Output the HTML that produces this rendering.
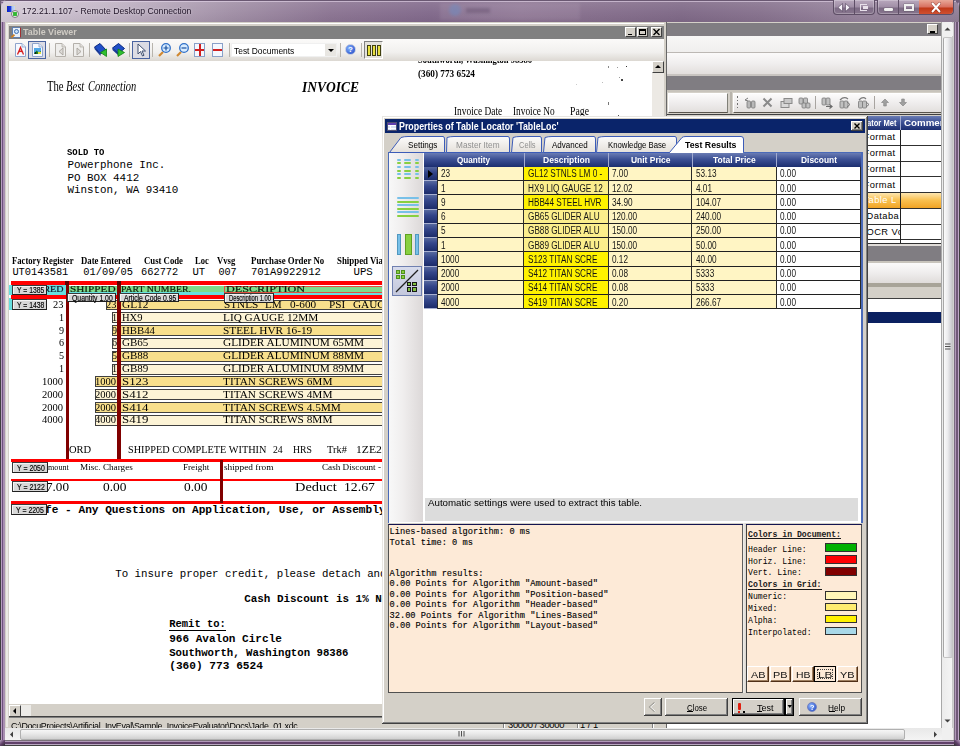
<!DOCTYPE html>
<html><head><meta charset="utf-8">
<style>
*{margin:0;padding:0;box-sizing:border-box}
html,body{width:960px;height:746px;overflow:hidden;background:#6f5f78;font-family:"Liberation Sans",sans-serif}
.a{position:absolute}
.t{position:absolute;white-space:pre;line-height:1}
.ser{font-family:"Liberation Serif",serif}
.mono{font-family:"Liberation Mono",monospace}
</style></head><body>

<!-- RDP frame -->
<div class="a" style="left:0;top:0;width:960px;height:746px;background:linear-gradient(90deg,#404040 0,#404040 1px,#b8a0c0 1px,#b8a0c0 2px,#705080 2px,#705080 3.5px,#a890b0 3.5px,#a890b0 5px,#787078 5px,#787078 6px,#6a5872 6px,#6a5872 953px,#d0d0d0 953px,#d0d0d0 954px,#7a6a80 954px,#7a6a80 955px,#b098b8 955px,#b098b8 956.5px,#705878 956.5px,#705878 958px,#c0a8c8 958px,#c0a8c8 959px,#404040 959px);border-radius:7px 7px 0 0"></div>
<div class="a" style="left:5px;top:740px;width:949px;height:6px;background:linear-gradient(180deg,#787078 0,#787078 1px,#b098b8 1px,#b098b8 2px,#60406a 2px,#60406a 4px,#b8a8c0 4px,#b8a8c0 5px,#404040 5px)"></div>
<div class="a" style="left:0;top:740px;width:5px;height:6px;background:linear-gradient(135deg,#b8a0c0,#60406a 50%,#303030)"></div>
<div class="a" style="left:954px;top:740px;width:6px;height:6px;background:linear-gradient(225deg,#c0a8c8,#60406a 50%,#303030)"></div>
<div class="a" style="left:1px;top:1px;width:958px;height:21px;border-radius:6px 6px 0 0;background:linear-gradient(90deg,#d4cad6 0,#c2b5c6 100px,#a08ea5 230px,#8a7391 330px,#80688a 430px,#8a7290 520px,#7e6886 680px,#85708c 760px,#95829b 860px,#8f7d95 960px)"></div>
<div class="a" style="left:1px;top:1px;width:958px;height:21px;border-radius:6px 6px 0 0;background:linear-gradient(180deg,rgba(255,255,255,.12) 0,rgba(255,255,255,.03) 12px,rgba(0,0,0,.03) 21px)"></div>
<div class="a" style="left:440px;top:3px;width:140px;height:17px;background:rgba(255,240,255,.08);filter:blur(1.5px)"></div>
<div class="a" style="left:449px;top:4px;width:12px;height:12px;border-radius:50%;background:#6a8ec8;filter:blur(1.8px);opacity:.45"></div>
<div class="a" style="left:466px;top:8px;width:24px;height:5px;background:rgba(60,40,70,.25);filter:blur(1.5px)"></div>
<div class="a" style="left:1px;top:1px;width:955px;height:1px;background:rgba(230,215,235,.6);border-radius:6px 6px 0 0"></div>
<!-- rdp icon -->
<div class="a" style="left:6px;top:5px;width:10px;height:8px;background:linear-gradient(90deg,#0a20c8 0,#2040e0 50%,#a8c0f0 60%,#c8d8f8 100%);border:1px solid #d8d0c0"></div>
<div class="a" style="left:10.5px;top:10px;width:8px;height:8px;border-radius:50%;background:radial-gradient(circle,#30b030 0,#40c040 55%,#f0f0f0 60%,#d0d0d0 100%);border:0.5px solid #808080"></div>
<div class="t" style="left:22px;top:6px;font-size:9.6px;color:#201428;transform:scaleX(0.905);transform-origin:0 0;text-shadow:0 0 3px rgba(255,255,255,.6)">172.21.1.107 - Remote Desktop Connection</div>
<!-- caption buttons -->
<div class="a" style="left:833px;top:0;width:42px;height:15px;border:1px solid #5e4e66;border-top:none;border-radius:0 0 4px 4px;background:linear-gradient(180deg,#b8a8bd 0,#a08ea6 7px,#7c6a84 8px,#8a7890 15px);box-shadow:inset 0 0 0 1px rgba(255,255,255,.25)"></div>
<div class="a" style="left:854px;top:0;width:1px;height:14px;background:#5e4e66"></div>
<svg class="a" style="left:836px;top:2px" width="16" height="11"><path d="M6.5 1.5 L2 5.5 L6.5 9.5 Z M9.5 1.5 L14 5.5 L9.5 9.5 Z" fill="#f4f0f6" stroke="#50405a" stroke-width="0.6"/></svg>
<div class="a" style="left:860px;top:4px;width:7px;height:7px;border:1.5px solid #e8e0ea;border-right:none"></div>
<div class="a" style="left:863px;top:6px;width:5px;height:3px;background:#e8e0ea"></div>
<div class="a" style="left:877px;top:0;width:77px;height:15px;border:1px solid #5e4e66;border-top:none;border-radius:0 0 4px 4px;background:linear-gradient(180deg,#b8a8bd 0,#a08ea6 7px,#7c6a84 8px,#8a7890 15px);overflow:hidden;box-shadow:inset 0 0 0 1px rgba(255,255,255,.25)"></div>
<div class="a" style="left:898px;top:0;width:1px;height:14px;background:#5e4e66"></div>
<div class="a" style="left:919px;top:0;width:34px;height:14px;border-radius:0 0 4px 0;background:linear-gradient(180deg,#e8a898 0,#d87060 7px,#c03818 8px,#d05030 14px)"></div>
<div class="a" style="left:884px;top:8px;width:9px;height:3px;background:#f0f0f0;border-radius:1px;box-shadow:0 0 1px #333"></div>
<div class="a" style="left:904px;top:4px;width:10px;height:7px;border:2px solid #f0f0f0;box-shadow:0 0 1px #333"></div>
<svg class="a" style="left:930px;top:2px" width="12" height="11"><path d="M2.5 1.5 L9.5 9.5 M9.5 1.5 L2.5 9.5" stroke="#5a1008" stroke-width="3" stroke-linecap="round" opacity=".5"/><path d="M2.5 1.5 L9.5 9.5 M9.5 1.5 L2.5 9.5" stroke="#fff" stroke-width="2" stroke-linecap="round"/></svg>
<!-- content bg -->
<div class="a" style="left:5px;top:22px;width:948px;height:718px;background:#4a3a50"></div>

<div class="a" style="left:5px;top:22px;width:662px;height:706px;background:#d4d0c8"></div>
<div class="a" style="left:6px;top:23px;width:659px;height:1px;background:#fff"></div>
<div class="a" style="left:6px;top:23px;width:2px;height:704px;background:#eceae6"></div>
<div class="a" style="left:664px;top:23px;width:2px;height:704px;background:#d4d0c8"></div>
<div class="a" style="left:666px;top:22px;width:1.2px;height:706px;background:#686868"></div>
<div class="a" style="left:9px;top:26px;width:655px;height:13px;background:#808080"></div>
<div class="a" style="left:12px;top:27px;width:9px;height:11px;background:#e8f0f8;border:1px solid #6080b0;border-right-color:#a03030"></div>
<div class="a" style="left:14px;top:29px;width:5px;height:5px;border-radius:50%;border:1px solid #4070b0;background:#c8e0f8"></div>
<div class="a" style="left:11px;top:35px;width:4px;height:2px;background:#d08020;transform:rotate(-45deg)"></div>
<div class="t" style="left:23px;top:27.4px;font-size:9.6px;font-weight:bold;color:#cfcbc4;transform:scaleX(0.93);transform-origin:0 0">Table Viewer</div>
<div class="a" style="left:625px;top:27px;width:11px;height:10px;background:#d4d0c8;border:1px solid;border-color:#fff #404040 #404040 #fff"></div>
<div class="a" style="left:637px;top:27px;width:11px;height:10px;background:#d4d0c8;border:1px solid;border-color:#fff #404040 #404040 #fff"></div>
<div class="a" style="left:651px;top:27px;width:11px;height:10px;background:#d4d0c8;border:1px solid;border-color:#fff #404040 #404040 #fff"></div>
<div class="a" style="left:628px;top:34px;width:4px;height:1px;background:#000"></div>
<div class="a" style="left:639px;top:29px;width:7px;height:6px;border:1px solid #000;border-top-width:2px"></div>
<svg class="a" style="left:652px;top:28px" width="9" height="8"><path d="M1.5 1 L7.5 7 M7.5 1 L1.5 7" stroke="#000" stroke-width="1.4"/></svg>
<div class="a" style="left:9px;top:39px;width:655px;height:22px;background:linear-gradient(180deg,#fbfaf9 0,#f1f0ee 60%,#dcd8d2 100%)"></div>
<div class="a" style="left:28px;top:41px;width:18px;height:18px;background:#dcdce4;border:1px solid #4a64a0"></div>
<div class="a" style="left:132px;top:41px;width:18px;height:18px;background:#dcdce4;border:1px solid #4a64a0"></div>
<div class="a" style="left:364px;top:41px;width:19px;height:18px;background:#e4e2dc;border:1px solid;border-color:#808080 #fff #fff #808080"></div>
<div class="a" style="left:48.5px;top:43px;width:1px;height:14px;background:#b8b4ac"></div>
<div class="a" style="left:88.5px;top:43px;width:1px;height:14px;background:#b8b4ac"></div>
<div class="a" style="left:129px;top:43px;width:1px;height:14px;background:#b8b4ac"></div>
<div class="a" style="left:152px;top:43px;width:1px;height:14px;background:#b8b4ac"></div>
<div class="a" style="left:228.5px;top:43px;width:1px;height:14px;background:#b8b4ac"></div>
<div class="a" style="left:339.5px;top:43px;width:1px;height:14px;background:#b8b4ac"></div>
<div class="a" style="left:361px;top:43px;width:1px;height:14px;background:#b8b4ac"></div>
<svg class="a" style="left:14px;top:42px" width="13" height="16"><path d="M1.5 1.5 H8 L11.5 5 V14.5 H1.5 Z" fill="#f6f9ff" stroke="#8ea4cc" stroke-width="1"/><path d="M8 1.5 V5 H11.5" fill="#dfe8f8" stroke="#8ea4cc" stroke-width="0.8"/><path d="M3.5 12.5 L6.5 5.5 L9.5 12.5 M4.5 10 Q6.5 8.5 9 10" fill="none" stroke="#d82020" stroke-width="1.3"/></svg>
<svg class="a" style="left:31px;top:42px" width="13" height="16"><path d="M1.5 1.5 H8 L11.5 5 V14.5 H1.5 Z" fill="#f6f9ff" stroke="#8ea4cc" stroke-width="1"/><path d="M8 1.5 V5 H11.5" fill="#dfe8f8" stroke="#8ea4cc" stroke-width="0.8"/><rect x="3" y="6" width="7" height="6" fill="#50a8e8"/><path d="M3 12 L5.5 8.5 L8 10.5 L10 9 V12 Z" fill="#208020"/><circle cx="4.5" cy="11" r="1" fill="#102010"/><rect x="7" y="10" width="3" height="2" fill="#e0e040"/></svg>
<svg class="a" style="left:54px;top:42px" width="14" height="16"><path d="M1.5 1.5 H8 L11.5 5 V14.5 H1.5 Z" fill="#efeeec" stroke="#b4b0aa" stroke-width="1"/><path d="M8 1.5 V5 H11.5" fill="#e0deda" stroke="#b4b0aa" stroke-width="0.8"/><path d="M9 6 L5 9.5 L9 13 Z" fill="#dcdad6" stroke="#a8a49e" stroke-width="0.9"/></svg>
<svg class="a" style="left:72px;top:42px" width="14" height="16"><path d="M1.5 1.5 H8 L11.5 5 V14.5 H1.5 Z" fill="#efeeec" stroke="#b4b0aa" stroke-width="1"/><path d="M8 1.5 V5 H11.5" fill="#e0deda" stroke="#b4b0aa" stroke-width="0.8"/><path d="M5 6 L9 9.5 L5 13 Z" fill="#dcdad6" stroke="#a8a49e" stroke-width="0.9"/></svg>
<svg class="a" style="left:93px;top:42px" width="15" height="16"><path d="M1.5 5 L7 1.5 L13 8 L7.5 12 Z" fill="#2050c8" stroke="#0c2a80" stroke-width="1"/><path d="M1.5 5 L1.5 7 L7.5 14 L7.5 12 Z" fill="#1a3a98"/><path d="M7.5 10.5 L13.5 7 V14.5 Z" fill="#30c030" stroke="#108010" stroke-width="0.8"/></svg>
<svg class="a" style="left:111px;top:42px" width="15" height="16"><path d="M1.5 6 L7.5 1.5 L13.5 6.5 L7.5 11.5 Z" fill="#2050c8" stroke="#0c2a80" stroke-width="1"/><path d="M1.5 6 L1.5 8 L7.5 13.5 L7.5 11.5 Z" fill="#1a3a98"/><path d="M7 7 L13.5 10.5 L7 14.5 Z" fill="#30c030" stroke="#108010" stroke-width="0.8"/></svg>
<svg class="a" style="left:136px;top:43px" width="12" height="14"><path d="M2 1 L2 11 L4.5 8.5 L6.5 13 L8 12.3 L6 8 L9.5 8 Z" fill="#fff" stroke="#405070" stroke-width="1"/></svg>
<svg class="a" style="left:157px;top:42px" width="15" height="16"><line x1="2" y1="14" x2="6" y2="10" stroke="#d08830" stroke-width="2.2"/><circle cx="9" cy="6" r="4.3" fill="#d8ecff" stroke="#3070c8" stroke-width="1.3"/><path d="M6.5 6 H11.5 M9 3.5 V8.5" stroke="#1850a0" stroke-width="1.2"/></svg>
<svg class="a" style="left:175px;top:42px" width="15" height="16"><line x1="2" y1="14" x2="6" y2="10" stroke="#d08830" stroke-width="2.2"/><circle cx="9" cy="6" r="4.3" fill="#d8ecff" stroke="#3070c8" stroke-width="1.3"/><path d="M6.5 6 H11.5" stroke="#1850a0" stroke-width="1.2"/></svg>
<div class="a" style="left:194px;top:43px;width:11px;height:14px;background:#f4f8ff;border:1px solid #8aa0c8"></div>
<div class="a" style="left:199px;top:44px;width:1.5px;height:12px;background:#d02020"></div>
<div class="a" style="left:195px;top:49px;width:9px;height:1.5px;background:#d02020"></div>
<div class="a" style="left:212px;top:43px;width:11px;height:14px;background:#f4f8ff;border:1px solid #8aa0c8"></div>
<div class="a" style="left:213px;top:49px;width:9px;height:1.5px;background:#d02020"></div>
<div class="a" style="left:231px;top:43px;width:106px;height:14px;background:#fff;border:1px solid #f0f0f0"></div>
<div class="t" style="left:234px;top:45.5px;font-size:9.5px;color:#000;transform:scaleX(0.885);transform-origin:0 0">Test Documents</div>
<div class="a" style="left:325px;top:44px;width:11px;height:12px;background:#e8e6e2"></div>
<div class="a" style="left:328px;top:49px;width:0;height:0;border-left:3px solid transparent;border-right:3px solid transparent;border-top:3px solid #000"></div>
<div class="a" style="left:345px;top:44px;width:11px;height:11px;border-radius:50%;background:radial-gradient(circle at 35% 35%,#80b0ff,#1840c0);border:1px solid #c0c8e0"></div>
<div class="t" style="left:348px;top:45.5px;font-size:8px;font-weight:bold;color:#fff">?</div>
<div class="a" style="left:367px;top:45px;width:4px;height:11px;background:#e8e040;border:1px solid #404010"></div>
<div class="a" style="left:372px;top:45px;width:4px;height:11px;background:#e8e040;border:1px solid #404010"></div>
<div class="a" style="left:377px;top:45px;width:4px;height:11px;background:#e8e040;border:1px solid #404010"></div>
<div class="a" style="left:652px;top:61px;width:12px;height:643px;background:#ece9e4"></div>
<div class="a" style="left:652px;top:61px;width:12px;height:12px;background:#d4d0c8;border:1px solid;border-color:#fff #404040 #404040 #fff"></div>
<div class="a" style="left:655px;top:65px;width:0;height:0;border-left:3px solid transparent;border-right:3px solid transparent;border-bottom:3px solid #000"></div>
<div class="a" style="left:9px;top:704px;width:655px;height:13px;background:#d4d0c8"></div>
<div class="a" style="left:9px;top:705px;width:12px;height:12px;background:#d4d0c8;border:1px solid;border-color:#fff #404040 #404040 #fff"></div>
<div class="a" style="left:13px;top:708px;width:0;height:0;border-top:3px solid transparent;border-bottom:3px solid transparent;border-right:3px solid #000"></div>
<div class="a" style="left:21px;top:705px;width:10px;height:11px;background:#ecebe8"></div>
<div class="a" style="left:9px;top:716px;width:655px;height:1px;background:#404040"></div>
<div class="a" style="left:9px;top:717px;width:655px;height:11px;background:#d4d0c8;border-top:1px solid #808080"></div>
<div class="a" style="left:9px;top:718px;width:655px;height:10px;overflow:hidden"><div class="t" style="left:2px;top:2.8px;font-size:9.4px;color:#000;letter-spacing:-0.35px;transform:scaleX(0.95);transform-origin:0 0">C:\DocuProjects\Artificial_InvEval\Sample_InvoiceEvaluator\Docs\Jade_01.xdc</div></div>
<div class="a" style="left:503.4px;top:718px;width:1px;height:10px;background:#808080;box-shadow:1px 0 0 #fff"></div>
<div class="a" style="left:577px;top:718px;width:1px;height:10px;background:#808080;box-shadow:1px 0 0 #fff"></div>
<div class="a" style="left:652px;top:718px;width:1px;height:10px;background:#808080;box-shadow:1px 0 0 #fff"></div>
<div class="t" style="left:508px;top:719.5px;font-size:9.4px;color:#000;letter-spacing:-0.3px">30000 / 30000</div>
<div class="t" style="left:580px;top:719.5px;font-size:9.4px;color:#000">1 / 1</div>
<div class="a" style="left:9px;top:61px;width:643px;height:643px;background:#fff"></div>
<div class="a" style="left:9px;top:61px;width:643px;height:643px;overflow:hidden;background:#fff"><div class="a" style="left:-9px;top:-61px;width:960px;height:746px">
<div class="t" style="left:418.3px;top:54.00px;font-family:'Liberation Serif';font-size:10.77px;font-weight:bold;font-style:normal;color:#000;transform:scaleX(0.7901);transform-origin:0 0;">Southworth, Washington 98386</div>
<div class="t" style="left:418.3px;top:67.70px;font-family:'Liberation Serif';font-size:10.77px;font-weight:bold;font-style:normal;color:#000;transform:scaleX(0.8586);transform-origin:0 0;">(360) 773 6524</div>
<div class="t" style="left:46.8px;top:78.70px;font-family:'Liberation Serif';font-size:14.46px;font-weight:normal;font-style:normal;color:#000;transform:scaleX(0.7383);transform-origin:0 0;">The</div>
<div class="t" style="left:66px;top:78.70px;font-family:'Liberation Serif';font-size:14.46px;font-weight:normal;font-style:italic;color:#000;transform:scaleX(0.7352);transform-origin:0 0;">Best</div>
<div class="t" style="left:88.1px;top:78.70px;font-family:'Liberation Serif';font-size:14.46px;font-weight:normal;font-style:italic;color:#000;transform:scaleX(0.7248);transform-origin:0 0;">Connection</div>
<div class="t" style="left:302px;top:80.30px;font-family:'Liberation Serif';font-size:14.31px;font-weight:bold;font-style:italic;color:#000;transform:scaleX(0.9439);transform-origin:0 0;">INVOICE</div>
<div class="t" style="left:454.2px;top:105.80px;font-family:'Liberation Serif';font-size:11.54px;font-weight:normal;font-style:normal;color:#000;transform:scaleX(0.8137);transform-origin:0 0;">Invoice Date</div>
<div class="t" style="left:513.3px;top:105.80px;font-family:'Liberation Serif';font-size:11.54px;font-weight:normal;font-style:normal;color:#000;transform:scaleX(0.8087);transform-origin:0 0;">Invoice No</div>
<div class="t" style="left:570px;top:105.80px;font-family:'Liberation Serif';font-size:11.54px;font-weight:normal;font-style:normal;color:#000;transform:scaleX(0.8474);transform-origin:0 0;">Page</div>
<div class="a" style="left:608px;top:66px;width:1.2px;height:1.5px;background:#888;"></div>
<div class="a" style="left:617px;top:66.5px;width:1px;height:1.2px;background:#999;"></div>
<div class="a" style="left:625.5px;top:65.5px;width:1.5px;height:1.5px;background:#333;"></div>
<div class="a" style="left:619px;top:77px;width:1.2px;height:1.2px;background:#999;"></div>
<div class="a" style="left:621px;top:79px;width:1.5px;height:1.8px;background:#444;"></div>
<div class="a" style="left:602px;top:82px;width:1px;height:1px;background:#bbb;"></div>
<div class="a" style="left:607.5px;top:102px;width:1px;height:2.5px;background:#777;"></div>
<div class="a" style="left:618px;top:114.5px;width:1px;height:1px;background:#555;"></div>
<div class="a" style="left:576px;top:84px;width:1px;height:1px;background:#ccc;"></div>
<div class="t" style="left:67.4px;top:148.90px;font-family:'Liberation Mono';font-size:8.64px;font-weight:bold;font-style:normal;color:#000;transform:scaleX(1.0294);transform-origin:0 0;">SOLD TO</div>
<div class="t" style="left:67.4px;top:160.00px;font-family:'Liberation Mono';font-size:10.88px;font-weight:normal;color:#000">Powerphone Inc.</div>
<div class="t" style="left:67.4px;top:172.60px;font-family:'Liberation Mono';font-size:10.88px;font-weight:normal;color:#000">PO BOX 4412</div>
<div class="t" style="left:67.4px;top:185.10px;font-family:'Liberation Mono';font-size:10.88px;font-weight:normal;color:#000">Winston, WA 93410</div>
<div class="t" style="left:12.4px;top:255.90px;font-family:'Liberation Serif';font-size:10.15px;font-weight:bold;font-style:normal;color:#000;transform:scaleX(0.8512);transform-origin:0 0;">Factory Register</div>
<div class="t" style="left:81.3px;top:255.90px;font-family:'Liberation Serif';font-size:10.15px;font-weight:bold;font-style:normal;color:#000;transform:scaleX(0.8613);transform-origin:0 0;">Date Entered</div>
<div class="t" style="left:144.2px;top:255.90px;font-family:'Liberation Serif';font-size:10.15px;font-weight:bold;font-style:normal;color:#000;transform:scaleX(0.8610);transform-origin:0 0;">Cust Code</div>
<div class="t" style="left:194.5px;top:255.90px;font-family:'Liberation Serif';font-size:10.15px;font-weight:bold;font-style:normal;color:#000;transform:scaleX(0.8460);transform-origin:0 0;">Loc</div>
<div class="t" style="left:217.4px;top:255.90px;font-family:'Liberation Serif';font-size:10.15px;font-weight:bold;font-style:normal;color:#000;transform:scaleX(0.8555);transform-origin:0 0;">Vvsg</div>
<div class="t" style="left:250.9px;top:255.90px;font-family:'Liberation Serif';font-size:10.15px;font-weight:bold;font-style:normal;color:#000;transform:scaleX(0.8714);transform-origin:0 0;">Purchase Order No</div>
<div class="t" style="left:337.3px;top:255.90px;font-family:'Liberation Serif';font-size:10.15px;font-weight:bold;font-style:normal;color:#000;transform:scaleX(0.8741);transform-origin:0 0;">Shipped Via</div>
<div class="t" style="left:12.4px;top:267.10px;font-family:'Liberation Mono';font-size:10.37px;font-weight:normal;color:#000">UT0143581</div>
<div class="t" style="left:83.2px;top:267.10px;font-family:'Liberation Mono';font-size:10.40px;font-weight:normal;color:#000">01/09/05</div>
<div class="t" style="left:141px;top:267.10px;font-family:'Liberation Mono';font-size:10.37px;font-weight:normal;color:#000">662772</div>
<div class="t" style="left:192.4px;top:267.10px;font-family:'Liberation Mono';font-size:10.67px;font-weight:normal;color:#000">UT</div>
<div class="t" style="left:218.4px;top:268.10px;font-family:'Liberation Mono';font-size:10.17px;font-weight:normal;color:#000">007</div>
<div class="t" style="left:250.9px;top:267.10px;font-family:'Liberation Mono';font-size:10.62px;font-weight:normal;color:#000">701A9922912</div>
<div class="t" style="left:353.5px;top:267.10px;font-family:'Liberation Mono';font-size:10.72px;font-weight:normal;color:#000">UPS</div>
<div class="a" style="left:11px;top:280.7px;width:372px;height:4.8px;background:#ff0000;"></div>
<div class="a" style="left:9px;top:285.2px;width:56.5px;height:9.8px;background:#66e0e0;"></div>
<div class="a" style="left:68.6px;top:285.5px;width:314px;height:7px;background:#7fdc8a;"></div>
<div class="a" style="left:68.6px;top:292.4px;width:314px;height:2.2px;background:#66e0e0;"></div>
<div class="a" style="left:224.4px;top:285.5px;width:160px;height:7.5px;background:transparent;border:1px solid #e05040;border-right:none"></div>
<div class="t" style="left:15.5px;top:284.80px;font-family:'Liberation Serif';font-size:8.62px;font-weight:normal;font-style:normal;color:#101828;transform:scaleX(1.1683);transform-origin:0 0;-webkit-text-stroke:0.2px #101828">ORDERED</div>
<div class="t" style="left:69.9px;top:284.80px;font-family:'Liberation Serif';font-size:8.62px;font-weight:normal;font-style:normal;color:#0c1c0c;transform:scaleX(1.3052);transform-origin:0 0;-webkit-text-stroke:0.2px #0c1c0c">SHIPPED</div>
<div class="t" style="left:121px;top:284.80px;font-family:'Liberation Serif';font-size:8.62px;font-weight:normal;font-style:normal;color:#0c1c0c;transform:scaleX(1.1348);transform-origin:0 0;-webkit-text-stroke:0.2px #0c1c0c">PART NUMBER.</div>
<div class="t" style="left:225.5px;top:284.80px;font-family:'Liberation Serif';font-size:8.62px;font-weight:normal;font-style:normal;color:#0c1c0c;transform:scaleX(1.4115);transform-origin:0 0;-webkit-text-stroke:0.2px #0c1c0c">DESCRIPTION</div>
<div class="a" style="left:9px;top:298.3px;width:3px;height:12px;background:#66e0e0;"></div>
<div class="a" style="left:106px;top:299.5px;width:277px;height:10.9px;background:#f8df8c;border:1px solid #404040;border-right:none"></div>
<div class="t" style="left:53.2px;top:298.97px;font-family:'Liberation Serif';font-size:10.92px;font-weight:normal;font-style:normal;color:#000;transform:scaleX(0.9536);transform-origin:0 0;">23</div>
<div class="a" style="left:107px;top:300.50px;width:10px;height:9px;overflow:hidden"><div class="a" style="left:-107px;top:-300.50px;width:400px;height:500px"><div class="t" style="left:106.2px;top:298.97px;font-family:'Liberation Serif';font-size:10.92px;font-weight:normal;font-style:normal;color:#000;transform:scaleX(0.9536);transform-origin:0 0;">23</div></div></div>
<div class="t" style="left:122px;top:299.97px;font-family:'Liberation Serif';font-size:10.15px;font-weight:normal;font-style:normal;color:#000;transform:scaleX(1.1175);transform-origin:0 0;">GL12</div>
<div class="t" style="left:223.8px;top:299.97px;font-family:'Liberation Serif';font-size:10.60px;font-weight:normal;font-style:normal;color:#000;transform:scaleX(1.06);transform-origin:0 0">STNLS</div>
<div class="t" style="left:265.3px;top:299.97px;font-family:'Liberation Serif';font-size:10.60px;font-weight:normal;font-style:normal;color:#000;transform:scaleX(1.06);transform-origin:0 0">LM</div>
<div class="t" style="left:290px;top:299.97px;font-family:'Liberation Serif';font-size:10.60px;font-weight:normal;font-style:normal;color:#000;transform:scaleX(1.06);transform-origin:0 0">0-600</div>
<div class="t" style="left:328.7px;top:299.97px;font-family:'Liberation Serif';font-size:10.60px;font-weight:normal;font-style:normal;color:#000;transform:scaleX(1.06);transform-origin:0 0">PSI</div>
<div class="t" style="left:352.5px;top:299.97px;font-family:'Liberation Serif';font-size:10.60px;font-weight:normal;font-style:normal;color:#000;transform:scaleX(1.06);transform-origin:0 0">GAUGE</div>
<div class="a" style="left:112.2px;top:312.33px;width:270.8px;height:10.9px;background:#fdf4d6;border:1px solid #404040;border-right:none"></div>
<div class="t" style="left:58.6px;top:311.80px;font-family:'Liberation Serif';font-size:10.92px;font-weight:normal;font-style:normal;color:#000;transform:scaleX(0.9261);transform-origin:0 0;">1</div>
<div class="a" style="left:113.2px;top:313.33px;width:3.799999999999997px;height:9px;overflow:hidden"><div class="a" style="left:-113.2px;top:-313.33px;width:400px;height:500px"><div class="t" style="left:111.6px;top:311.80px;font-family:'Liberation Serif';font-size:10.92px;font-weight:normal;font-style:normal;color:#000;transform:scaleX(0.9261);transform-origin:0 0;">1</div></div></div>
<div class="t" style="left:122px;top:312.80px;font-family:'Liberation Serif';font-size:10.15px;font-weight:normal;font-style:normal;color:#000;transform:scaleX(1.0413);transform-origin:0 0;">HX9</div>
<div class="t" style="left:223.4px;top:312.80px;font-family:'Liberation Serif';font-size:10.60px;font-weight:normal;font-style:normal;color:#000;transform:scaleX(1.065);transform-origin:0 0">LIQ GAUGE 12MM</div>
<div class="a" style="left:112.2px;top:325.16px;width:270.8px;height:10.9px;background:#f8df8c;border:1px solid #404040;border-right:none"></div>
<div class="t" style="left:58.6px;top:324.63px;font-family:'Liberation Serif';font-size:10.92px;font-weight:normal;font-style:normal;color:#000;transform:scaleX(0.9261);transform-origin:0 0;">9</div>
<div class="a" style="left:113.2px;top:326.16px;width:3.799999999999997px;height:9px;overflow:hidden"><div class="a" style="left:-113.2px;top:-326.16px;width:400px;height:500px"><div class="t" style="left:111.6px;top:324.63px;font-family:'Liberation Serif';font-size:10.92px;font-weight:normal;font-style:normal;color:#000;transform:scaleX(0.9261);transform-origin:0 0;">9</div></div></div>
<div class="t" style="left:122px;top:325.63px;font-family:'Liberation Serif';font-size:10.15px;font-weight:normal;font-style:normal;color:#000;transform:scaleX(1.0661);transform-origin:0 0;">HBB44</div>
<div class="t" style="left:223.4px;top:325.63px;font-family:'Liberation Serif';font-size:10.60px;font-weight:normal;font-style:normal;color:#000;transform:scaleX(1.065);transform-origin:0 0">STEEL HVR 16-19</div>
<div class="a" style="left:112.2px;top:337.99px;width:270.8px;height:10.9px;background:#fdf4d6;border:1px solid #404040;border-right:none"></div>
<div class="t" style="left:58.6px;top:337.46px;font-family:'Liberation Serif';font-size:10.92px;font-weight:normal;font-style:normal;color:#000;transform:scaleX(0.9261);transform-origin:0 0;">6</div>
<div class="a" style="left:113.2px;top:338.99px;width:3.799999999999997px;height:9px;overflow:hidden"><div class="a" style="left:-113.2px;top:-338.99px;width:400px;height:500px"><div class="t" style="left:111.6px;top:337.46px;font-family:'Liberation Serif';font-size:10.92px;font-weight:normal;font-style:normal;color:#000;transform:scaleX(0.9261);transform-origin:0 0;">6</div></div></div>
<div class="t" style="left:122px;top:338.46px;font-family:'Liberation Serif';font-size:10.15px;font-weight:normal;font-style:normal;color:#000;transform:scaleX(1.0908);transform-origin:0 0;">GB65</div>
<div class="t" style="left:223.4px;top:338.46px;font-family:'Liberation Serif';font-size:10.60px;font-weight:normal;font-style:normal;color:#000;transform:scaleX(1.065);transform-origin:0 0">GLIDER ALUMINUM 65MM</div>
<div class="a" style="left:112.2px;top:350.82px;width:270.8px;height:10.9px;background:#f8df8c;border:1px solid #404040;border-right:none"></div>
<div class="t" style="left:58.6px;top:350.29px;font-family:'Liberation Serif';font-size:10.92px;font-weight:normal;font-style:normal;color:#000;transform:scaleX(0.9261);transform-origin:0 0;">5</div>
<div class="a" style="left:113.2px;top:351.82px;width:3.799999999999997px;height:9px;overflow:hidden"><div class="a" style="left:-113.2px;top:-351.82px;width:400px;height:500px"><div class="t" style="left:111.6px;top:350.29px;font-family:'Liberation Serif';font-size:10.92px;font-weight:normal;font-style:normal;color:#000;transform:scaleX(0.9261);transform-origin:0 0;">5</div></div></div>
<div class="t" style="left:122px;top:351.29px;font-family:'Liberation Serif';font-size:10.15px;font-weight:normal;font-style:normal;color:#000;transform:scaleX(1.0908);transform-origin:0 0;">GB88</div>
<div class="t" style="left:223.4px;top:351.29px;font-family:'Liberation Serif';font-size:10.60px;font-weight:normal;font-style:normal;color:#000;transform:scaleX(1.065);transform-origin:0 0">GLIDER ALUMINUM 88MM</div>
<div class="a" style="left:112.2px;top:363.65px;width:270.8px;height:10.9px;background:#fdf4d6;border:1px solid #404040;border-right:none"></div>
<div class="t" style="left:58.6px;top:363.12px;font-family:'Liberation Serif';font-size:10.92px;font-weight:normal;font-style:normal;color:#000;transform:scaleX(0.9261);transform-origin:0 0;">1</div>
<div class="a" style="left:113.2px;top:364.65px;width:3.799999999999997px;height:9px;overflow:hidden"><div class="a" style="left:-113.2px;top:-364.65px;width:400px;height:500px"><div class="t" style="left:111.6px;top:363.12px;font-family:'Liberation Serif';font-size:10.92px;font-weight:normal;font-style:normal;color:#000;transform:scaleX(0.9261);transform-origin:0 0;">1</div></div></div>
<div class="t" style="left:122px;top:364.12px;font-family:'Liberation Serif';font-size:10.15px;font-weight:normal;font-style:normal;color:#000;transform:scaleX(1.0908);transform-origin:0 0;">GB89</div>
<div class="t" style="left:223.4px;top:364.12px;font-family:'Liberation Serif';font-size:10.60px;font-weight:normal;font-style:normal;color:#000;transform:scaleX(1.065);transform-origin:0 0">GLIDER ALUMINUM 89MM</div>
<div class="a" style="left:94.6px;top:376.48px;width:288.4px;height:10.9px;background:#f8df8c;border:1px solid #404040;border-right:none"></div>
<div class="t" style="left:42.4px;top:375.95px;font-family:'Liberation Serif';font-size:10.92px;font-weight:normal;font-style:normal;color:#000;transform:scaleX(0.9673);transform-origin:0 0;">1000</div>
<div class="a" style="left:95.6px;top:377.48px;width:21.400000000000006px;height:9px;overflow:hidden"><div class="a" style="left:-95.6px;top:-377.48px;width:400px;height:500px"><div class="t" style="left:95.4px;top:375.95px;font-family:'Liberation Serif';font-size:10.92px;font-weight:normal;font-style:normal;color:#000;transform:scaleX(0.9673);transform-origin:0 0;">1000</div></div></div>
<div class="t" style="left:122px;top:376.95px;font-family:'Liberation Serif';font-size:10.15px;font-weight:normal;font-style:normal;color:#000;transform:scaleX(1.2675);transform-origin:0 0;">S123</div>
<div class="t" style="left:223.4px;top:376.95px;font-family:'Liberation Serif';font-size:10.60px;font-weight:normal;font-style:normal;color:#000;transform:scaleX(1.065);transform-origin:0 0">TITAN SCREWS 6MM</div>
<div class="a" style="left:94.6px;top:389.31px;width:288.4px;height:10.9px;background:#fdf4d6;border:1px solid #404040;border-right:none"></div>
<div class="t" style="left:42.4px;top:388.78px;font-family:'Liberation Serif';font-size:10.92px;font-weight:normal;font-style:normal;color:#000;transform:scaleX(0.9673);transform-origin:0 0;">2000</div>
<div class="a" style="left:95.6px;top:390.31px;width:21.400000000000006px;height:9px;overflow:hidden"><div class="a" style="left:-95.6px;top:-390.31px;width:400px;height:500px"><div class="t" style="left:95.4px;top:388.78px;font-family:'Liberation Serif';font-size:10.92px;font-weight:normal;font-style:normal;color:#000;transform:scaleX(0.9673);transform-origin:0 0;">2000</div></div></div>
<div class="t" style="left:122px;top:389.78px;font-family:'Liberation Serif';font-size:10.15px;font-weight:normal;font-style:normal;color:#000;transform:scaleX(1.2675);transform-origin:0 0;">S412</div>
<div class="t" style="left:223.4px;top:389.78px;font-family:'Liberation Serif';font-size:10.60px;font-weight:normal;font-style:normal;color:#000;transform:scaleX(1.065);transform-origin:0 0">TITAN SCREWS 4MM</div>
<div class="a" style="left:94.6px;top:402.14px;width:288.4px;height:10.9px;background:#f8df8c;border:1px solid #404040;border-right:none"></div>
<div class="t" style="left:42.4px;top:401.61px;font-family:'Liberation Serif';font-size:10.92px;font-weight:normal;font-style:normal;color:#000;transform:scaleX(0.9673);transform-origin:0 0;">2000</div>
<div class="a" style="left:95.6px;top:403.14px;width:21.400000000000006px;height:9px;overflow:hidden"><div class="a" style="left:-95.6px;top:-403.14px;width:400px;height:500px"><div class="t" style="left:95.4px;top:401.61px;font-family:'Liberation Serif';font-size:10.92px;font-weight:normal;font-style:normal;color:#000;transform:scaleX(0.9673);transform-origin:0 0;">2000</div></div></div>
<div class="t" style="left:122px;top:402.61px;font-family:'Liberation Serif';font-size:10.15px;font-weight:normal;font-style:normal;color:#000;transform:scaleX(1.2675);transform-origin:0 0;">S414</div>
<div class="t" style="left:223.4px;top:402.61px;font-family:'Liberation Serif';font-size:10.60px;font-weight:normal;font-style:normal;color:#000;transform:scaleX(1.065);transform-origin:0 0">TITAN SCREWS 4.5MM</div>
<div class="a" style="left:94.6px;top:414.97px;width:288.4px;height:10.9px;background:#fdf4d6;border:1px solid #404040;border-right:none"></div>
<div class="t" style="left:42.4px;top:414.44px;font-family:'Liberation Serif';font-size:10.92px;font-weight:normal;font-style:normal;color:#000;transform:scaleX(0.9673);transform-origin:0 0;">4000</div>
<div class="a" style="left:95.6px;top:415.97px;width:21.400000000000006px;height:9px;overflow:hidden"><div class="a" style="left:-95.6px;top:-415.97px;width:400px;height:500px"><div class="t" style="left:95.4px;top:414.44px;font-family:'Liberation Serif';font-size:10.92px;font-weight:normal;font-style:normal;color:#000;transform:scaleX(0.9673);transform-origin:0 0;">4000</div></div></div>
<div class="t" style="left:122px;top:415.44px;font-family:'Liberation Serif';font-size:10.15px;font-weight:normal;font-style:normal;color:#000;transform:scaleX(1.2675);transform-origin:0 0;">S419</div>
<div class="t" style="left:223.4px;top:415.44px;font-family:'Liberation Serif';font-size:10.60px;font-weight:normal;font-style:normal;color:#000;transform:scaleX(1.065);transform-origin:0 0">TITAN SCREWS 8MM</div>
<div class="a" style="left:11px;top:294.6px;width:372px;height:4.4px;background:#ff0000;"></div>
<div class="a" style="left:65.5px;top:280.7px;width:3.4px;height:181px;background:#800000;"></div>
<div class="a" style="left:117.2px;top:280.7px;width:3.4px;height:181px;background:#800000;"></div>
<div class="a" style="left:65px;top:280.7px;width:4.4px;height:4.8px;background:#600000;"></div>
<div class="a" style="left:116.7px;top:280.7px;width:4.4px;height:4.8px;background:#600000;"></div>
<div class="a" style="left:11.5px;top:284.8px;width:35.3px;height:10px;background:#d8d8d8;border:1px solid #3a3a3a;border-right-color:#202020;border-bottom:1.5px solid #202020;box-shadow:inset 1px 1px 0 #f4f4f4"></div><div class="t" style="left:16.5px;top:286.27px;font-family:'Liberation Sans';font-size:8.4px;color:#000;-webkit-text-stroke:0.15px #000;transform:scaleX(0.8119);transform-origin:0 0">Y = 1385</div>
<div class="a" style="left:11.5px;top:299px;width:35.3px;height:10.5px;background:#d8d8d8;border:1px solid #3a3a3a;border-right-color:#202020;border-bottom:1.5px solid #202020;box-shadow:inset 1px 1px 0 #f4f4f4"></div><div class="t" style="left:16.5px;top:300.72px;font-family:'Liberation Sans';font-size:8.4px;color:#000;-webkit-text-stroke:0.15px #000;transform:scaleX(0.8119);transform-origin:0 0">Y = 1438</div>
<div class="a" style="left:67.4px;top:292.9px;width:48.7px;height:9.6px;background:#d8d8d8;border:1px solid #3a3a3a;border-right-color:#202020;border-bottom:1.5px solid #202020;box-shadow:inset 1px 1px 0 #f4f4f4"></div><div class="t" style="left:72.4px;top:294.17px;font-family:'Liberation Sans';font-size:8.4px;color:#000;-webkit-text-stroke:0.15px #000;transform:scaleX(0.8168);transform-origin:0 0">Quantity 1.00</div>
<div class="a" style="left:119px;top:292.8px;width:60.2px;height:9.6px;background:#d8d8d8;border:1px solid #3a3a3a;border-right-color:#202020;border-bottom:1.5px solid #202020;box-shadow:inset 1px 1px 0 #f4f4f4"></div><div class="t" style="left:124px;top:294.07px;font-family:'Liberation Sans';font-size:8.4px;color:#000;-webkit-text-stroke:0.15px #000;transform:scaleX(0.8125);transform-origin:0 0">Article Code 0.95</div>
<div class="a" style="left:224.4px;top:293px;width:50px;height:9.8px;background:#d8d8d8;border:1px solid #3a3a3a;border-right-color:#202020;border-bottom:1.5px solid #202020;box-shadow:inset 1px 1px 0 #f4f4f4"></div><div class="t" style="left:229.4px;top:294.37px;font-family:'Liberation Sans';font-size:8.4px;color:#000;-webkit-text-stroke:0.15px #000;transform:scaleX(0.6939);transform-origin:0 0">Description 1.00</div>
<div class="t" style="left:69px;top:443.80px;font-family:'Liberation Serif';font-size:10.77px;font-weight:normal;font-style:normal;color:#000;transform:scaleX(0.9765);transform-origin:0 0;">ORD</div>
<div class="t" style="left:128.4px;top:443.80px;font-family:'Liberation Serif';font-size:10.77px;font-weight:normal;font-style:normal;color:#000;transform:scaleX(0.9536);transform-origin:0 0;">SHIPPED COMPLETE WITHIN</div>
<div class="t" style="left:273.3px;top:443.80px;font-family:'Liberation Serif';font-size:10.77px;font-weight:normal;font-style:normal;color:#000;transform:scaleX(0.9010);transform-origin:0 0;">24</div>
<div class="t" style="left:292.6px;top:443.80px;font-family:'Liberation Serif';font-size:10.77px;font-weight:normal;font-style:normal;color:#000;transform:scaleX(0.9020);transform-origin:0 0;">HRS</div>
<div class="t" style="left:326.5px;top:443.80px;font-family:'Liberation Serif';font-size:10.77px;font-weight:normal;font-style:normal;color:#000;transform:scaleX(0.9678);transform-origin:0 0;">Trk#</div>
<div class="t" style="left:355.5px;top:443.80px;font-family:'Liberation Serif';font-size:10.77px;font-weight:normal;font-style:normal;color:#000;transform:scaleX(1.0820);transform-origin:0 0;">1ZE2E</div>
<div class="a" style="left:11px;top:459.2px;width:372px;height:2.9px;background:#ff0000;"></div>
<div class="a" style="left:11px;top:479px;width:372px;height:2.4px;background:#ff0000;"></div>
<div class="a" style="left:11px;top:501px;width:372px;height:2.9px;background:#ff0000;"></div>
<div class="a" style="left:220.2px;top:460px;width:2.8px;height:43px;background:#800000;"></div>
<div class="t" style="left:47.6px;top:463.00px;font-family:'Liberation Serif';font-size:8.77px;font-weight:normal;font-style:normal;color:#000;transform:scaleX(0.9283);transform-origin:0 0;">mount</div>
<div class="t" style="left:80.3px;top:463.00px;font-family:'Liberation Serif';font-size:9.23px;font-weight:normal;font-style:normal;color:#000;transform:scaleX(0.9945);transform-origin:0 0;">Misc. Charges</div>
<div class="t" style="left:183px;top:463.00px;font-family:'Liberation Serif';font-size:9.23px;font-weight:normal;font-style:normal;color:#000;transform:scaleX(0.9872);transform-origin:0 0;">Freight</div>
<div class="t" style="left:223.5px;top:463.20px;font-family:'Liberation Serif';font-size:8.77px;font-weight:normal;font-style:normal;color:#000;transform:scaleX(1.0624);transform-origin:0 0;">shipped from</div>
<div class="t" style="left:322px;top:463.20px;font-family:'Liberation Serif';font-size:9.08px;font-weight:normal;font-style:normal;color:#000;transform:scaleX(1.0085);transform-origin:0 0;">Cash Discount -</div>
<div class="t" style="left:45.5px;top:482.40px;font-family:'Liberation Serif';font-size:11.54px;font-weight:normal;font-style:normal;color:#000;transform:scaleX(1.1393);transform-origin:0 0;">7.00</div>
<div class="t" style="left:103.4px;top:482.40px;font-family:'Liberation Serif';font-size:11.54px;font-weight:normal;font-style:normal;color:#000;transform:scaleX(1.1591);transform-origin:0 0;">0.00</div>
<div class="t" style="left:183.5px;top:482.40px;font-family:'Liberation Serif';font-size:11.54px;font-weight:normal;font-style:normal;color:#000;transform:scaleX(1.1591);transform-origin:0 0;">0.00</div>
<div class="t" style="left:294.6px;top:482.30px;font-family:'Liberation Serif';font-size:11.54px;font-weight:normal;font-style:normal;color:#000;transform:scaleX(1.2518);transform-origin:0 0;">Deduct</div>
<div class="t" style="left:344.4px;top:482.30px;font-family:'Liberation Serif';font-size:11.54px;font-weight:normal;font-style:normal;color:#000;transform:scaleX(1.1906);transform-origin:0 0;">12.67</div>
<div class="a" style="left:12px;top:462.4px;width:35.8px;height:10.9px;background:#d8d8d8;border:1px solid #3a3a3a;border-right-color:#202020;border-bottom:1.5px solid #202020;box-shadow:inset 1px 1px 0 #f4f4f4"></div><div class="t" style="left:17px;top:464.32px;font-family:'Liberation Sans';font-size:8.4px;color:#000;-webkit-text-stroke:0.15px #000;transform:scaleX(0.8268);transform-origin:0 0">Y = 2050</div>
<div class="a" style="left:12px;top:481.3px;width:35.8px;height:10.5px;background:#d8d8d8;border:1px solid #3a3a3a;border-right-color:#202020;border-bottom:1.5px solid #202020;box-shadow:inset 1px 1px 0 #f4f4f4"></div><div class="t" style="left:17px;top:483.02px;font-family:'Liberation Sans';font-size:8.4px;color:#000;-webkit-text-stroke:0.15px #000;transform:scaleX(0.8268);transform-origin:0 0">Y = 2122</div>
<div class="t" style="left:31.74px;top:505.20px;font-family:'Liberation Mono';font-size:11.13px;font-weight:bold;color:#000">Safe - Any Questions on Application, Use, or Assembly</div>
<div class="a" style="left:11.2px;top:504px;width:35.8px;height:10.7px;background:#d8d8d8;border:1px solid #3a3a3a;border-right-color:#202020;border-bottom:1.5px solid #202020;box-shadow:inset 1px 1px 0 #f4f4f4"></div><div class="t" style="left:16.2px;top:505.82px;font-family:'Liberation Sans';font-size:8.4px;color:#000;-webkit-text-stroke:0.15px #000;transform:scaleX(0.8268);transform-origin:0 0">Y = 2205</div>
<div class="t" style="left:115.2px;top:568.90px;font-family:'Liberation Mono';font-size:10.78px;font-weight:normal;color:#000">To insure proper credit, please detach and return</div>
<div class="t" style="left:244.2px;top:594.30px;font-family:'Liberation Mono';font-size:10.93px;font-weight:bold;color:#000">Cash Discount is 1% Net 10</div>
<div class="t" style="left:169.2px;top:619.00px;font-family:'Liberation Mono';font-size:10.50px;font-weight:bold;color:#000">Remit to:</div>
<div class="a" style="left:169.2px;top:629.6px;width:57px;height:1px;background:#000;"></div>
<div class="t" style="left:169.2px;top:634.20px;font-family:'Liberation Mono';font-size:11.05px;font-weight:bold;color:#000">966 Avalon Circle</div>
<div class="t" style="left:169.2px;top:648.20px;font-family:'Liberation Mono';font-size:10.68px;font-weight:bold;color:#000">Southworth, Washington 98386</div>
<div class="t" style="left:169.2px;top:660.50px;font-family:'Liberation Mono';font-size:11.17px;font-weight:bold;color:#000">(360) 773 6524</div>
</div></div>
<div class="a" style="left:667px;top:22px;width:274px;height:706px;overflow:hidden;background:#fff"><div class="a" style="left:-667px;top:-22px;width:960px;height:746px">
<div class="a" style="left:667px;top:22px;width:275px;height:1px;background:#d4d0c8;"></div>
<div class="a" style="left:667px;top:23px;width:275px;height:12.6px;background:#807d82;"></div>
<div class="a" style="left:927px;top:24px;width:11px;height:10px;background:#d4d0c8;border:1px solid;border-color:#fff #404040 #404040 #fff"></div>
<div class="a" style="left:930px;top:31px;width:5px;height:1.5px;background:#000;"></div>
<div class="a" style="left:667px;top:35.6px;width:275px;height:16px;background:linear-gradient(180deg,#f8f7f6,#f0efee);"></div>
<div class="a" style="left:667px;top:51.5px;width:275px;height:1.5px;background:#bcb8b4;"></div>
<div class="a" style="left:667px;top:53px;width:275px;height:21px;background:linear-gradient(180deg,#fbfafa 0,#f0eeee 50%,#e2dedc 100%);"></div>
<div class="a" style="left:667px;top:74px;width:275px;height:1.6px;background:#c8c4c0;"></div>
<div class="a" style="left:667px;top:75.6px;width:275px;height:14.7px;background:#807d82;"></div>
<div class="a" style="left:667px;top:90.3px;width:275px;height:2px;background:#c8c4bc;"></div>
<div class="a" style="left:667px;top:92px;width:275px;height:22.5px;background:#d4d0c8;"></div>
<div class="a" style="left:668px;top:93px;width:60px;height:20px;background:linear-gradient(180deg,#fcfbfb 0,#efeded 50%,#e2dfdd 100%);border:1px solid;border-color:#fff #808078 #58544c #fff"></div>
<div class="a" style="left:729.5px;top:92px;width:2.5px;height:22px;background:#b8b4ac;"></div>
<div class="a" style="left:733px;top:93px;width:209px;height:20px;background:linear-gradient(180deg,#fcfbfb 0,#efeded 50%,#e2dfdd 100%);border:1px solid;border-color:#fff #808078 #58544c #fff"></div>
<div class="a" style="left:736.5px;top:96.0px;width:1.2px;height:1.6px;background:#707070;"></div>
<div class="a" style="left:736.5px;top:99.6px;width:1.2px;height:1.6px;background:#707070;"></div>
<div class="a" style="left:736.5px;top:103.2px;width:1.2px;height:1.6px;background:#707070;"></div>
<div class="a" style="left:736.5px;top:106.8px;width:1.2px;height:1.6px;background:#707070;"></div>
<svg class="a" style="left:744px;top:97px" width="12" height="12"><path d="M1 3 L4 1 M1 3 L4 4" stroke="#7a7a7a" stroke-width="1"/><rect x="3" y="4" width="3.5" height="7" rx="1" fill="#b8b8b8" stroke="#7a7a7a" stroke-width="0.8"/><rect x="7.5" y="4" width="3.5" height="7" rx="1" fill="#b8b8b8" stroke="#7a7a7a" stroke-width="0.8"/></svg>
<svg class="a" style="left:762px;top:97px" width="11" height="11"><path d="M1.5 1.5 L9.5 9.5 M9.5 1.5 L1.5 9.5" stroke="#8a8a8a" stroke-width="2"/></svg>
<svg class="a" style="left:780px;top:97px" width="13" height="12"><rect x="1" y="4.5" width="8" height="6" fill="#d8d8d8" stroke="#8a8a8a" stroke-width="1"/><rect x="4" y="1.5" width="8" height="5" fill="#c8c8c8" stroke="#8a8a8a" stroke-width="1"/></svg>
<svg class="a" style="left:798px;top:96px" width="13" height="13"><rect x="1" y="2" width="4" height="6" rx="1" fill="#c0c0c0" stroke="#7a7a7a" stroke-width="0.8"/><rect x="5.5" y="2" width="4" height="6" rx="1" fill="#c0c0c0" stroke="#7a7a7a" stroke-width="0.8"/><rect x="4" y="7" width="4" height="5" rx="1" fill="#c0c0c0" stroke="#7a7a7a" stroke-width="0.8"/><rect x="8" y="7" width="4" height="5" rx="1" fill="#c0c0c0" stroke="#7a7a7a" stroke-width="0.8"/></svg>
<div class="a" style="left:815px;top:96px;width:1px;height:13px;background:#a8a4a0;"></div>
<svg class="a" style="left:821px;top:96px" width="13" height="14"><rect x="1" y="2" width="4" height="7" rx="1" fill="#c0c0c0" stroke="#7a7a7a" stroke-width="0.8"/><rect x="5" y="2" width="4" height="7" rx="1" fill="#c0c0c0" stroke="#7a7a7a" stroke-width="0.8"/><path d="M5 10.5 H10 M8.5 8.5 L11 10.5 L8.5 12.5" stroke="#6a6a6a" stroke-width="1.2" fill="none"/></svg>
<svg class="a" style="left:838px;top:96px" width="14" height="14"><path d="M2 4 Q6 0 10 3" stroke="#7a7a7a" stroke-width="1.2" fill="none"/><rect x="2" y="5" width="4" height="7" rx="1" fill="#c0c0c0" stroke="#7a7a7a" stroke-width="0.8"/><rect x="6" y="5" width="4" height="7" rx="1" fill="#c0c0c0" stroke="#7a7a7a" stroke-width="0.8"/><path d="M9 6 L12 8.5 L9 11" stroke="#7a7a7a" stroke-width="1" fill="none"/></svg>
<svg class="a" style="left:857px;top:96px" width="13" height="14"><path d="M2 4 Q6 0 9 3" stroke="#7a7a7a" stroke-width="1.2" fill="none"/><rect x="1.5" y="5" width="4" height="7" rx="1" fill="#c0c0c0" stroke="#7a7a7a" stroke-width="0.8"/><rect x="5.5" y="5" width="4" height="7" rx="1" fill="#c0c0c0" stroke="#7a7a7a" stroke-width="0.8"/><path d="M9 6 L12 8.5 L9 11" stroke="#7a7a7a" stroke-width="1" fill="none"/></svg>
<div class="a" style="left:874px;top:96px;width:1px;height:13px;background:#a8a4a0;"></div>
<svg class="a" style="left:881px;top:98px" width="8" height="9"><path d="M4 1 L7.5 4.5 L5.3 4.5 L5.3 8 L2.7 8 L2.7 4.5 L0.5 4.5 Z" fill="#a0a0a0" stroke="#808080" stroke-width="0.6"/></svg>
<svg class="a" style="left:899px;top:98px" width="8" height="9"><path d="M4 8 L7.5 4.5 L5.3 4.5 L5.3 1 L2.7 1 L2.7 4.5 L0.5 4.5 Z" fill="#a0a0a0" stroke="#808080" stroke-width="0.6"/></svg>
<div class="a" style="left:667px;top:113.5px;width:275px;height:1.5px;background:#404040;"></div>
<div class="a" style="left:667px;top:115px;width:275px;height:1px;background:#d4d0c8;"></div>
<div class="a" style="left:667px;top:116px;width:275px;height:14px;background:linear-gradient(180deg,#6a7cb4 0,#3c5094 45%,#1c2e70 100%);"></div>
<div class="a" style="left:900px;top:116px;width:1px;height:14px;background:#a0aad0;"></div>
<div class="t" style="left:866.50px;top:118.60px;font-family:'Liberation Sans';font-size:9.3px;font-weight:bold;color:#fff;transform:scaleX(0.8156);transform-origin:0 0;">ator Met</div>
<div class="t" style="left:904.00px;top:117.60px;font-family:'Liberation Sans';font-size:9.5px;font-weight:bold;color:#fff;transform:scaleX(1.0271);transform-origin:0 0;">Comment</div>
<div class="a" style="left:667px;top:144.75px;width:275px;height:1px;background:#303030;"></div>
<div class="a" style="left:860px;top:130.00px;width:40px;height:15px;overflow:hidden"><div class="a" style="left:-860px;top:-130.00px;width:960px;height:200px"><div class="t" style="left:863.50px;top:133.30px;font-family:'Liberation Sans';font-size:9.3px;font-weight:normal;color:#000;letter-spacing:0.45px">Format</div></div></div>
<div class="a" style="left:667px;top:160.5px;width:275px;height:1px;background:#303030;"></div>
<div class="a" style="left:860px;top:145.75px;width:40px;height:15px;overflow:hidden"><div class="a" style="left:-860px;top:-145.75px;width:960px;height:200px"><div class="t" style="left:863.50px;top:149.05px;font-family:'Liberation Sans';font-size:9.3px;font-weight:normal;color:#000;letter-spacing:0.45px">Format</div></div></div>
<div class="a" style="left:667px;top:176.25px;width:275px;height:1px;background:#303030;"></div>
<div class="a" style="left:860px;top:161.50px;width:40px;height:15px;overflow:hidden"><div class="a" style="left:-860px;top:-161.50px;width:960px;height:200px"><div class="t" style="left:863.50px;top:164.80px;font-family:'Liberation Sans';font-size:9.3px;font-weight:normal;color:#000;letter-spacing:0.45px">Format</div></div></div>
<div class="a" style="left:667px;top:192.0px;width:275px;height:1px;background:#303030;"></div>
<div class="a" style="left:860px;top:177.25px;width:40px;height:15px;overflow:hidden"><div class="a" style="left:-860px;top:-177.25px;width:960px;height:200px"><div class="t" style="left:863.50px;top:180.55px;font-family:'Liberation Sans';font-size:9.3px;font-weight:normal;color:#000;letter-spacing:0.45px">Format</div></div></div>
<div class="a" style="left:667px;top:193.0px;width:275px;height:15.75px;background:linear-gradient(180deg,#fde6b0 0,#f9c050 45%,#f0a020 100%);"></div>
<div class="a" style="left:667px;top:207.75px;width:275px;height:1px;background:#303030;"></div>
<div class="a" style="left:860px;top:193.00px;width:40px;height:15px;overflow:hidden"><div class="a" style="left:-860px;top:-193.00px;width:960px;height:200px"><div class="t" style="left:863.50px;top:196.30px;font-family:'Liberation Sans';font-size:9.3px;font-weight:normal;color:#fff;letter-spacing:0.45px">Table L</div></div></div>
<div class="a" style="left:667px;top:223.5px;width:275px;height:1px;background:#303030;"></div>
<div class="a" style="left:860px;top:208.75px;width:40px;height:15px;overflow:hidden"><div class="a" style="left:-860px;top:-208.75px;width:960px;height:200px"><div class="t" style="left:866.50px;top:212.05px;font-family:'Liberation Sans';font-size:9.3px;font-weight:normal;color:#000;letter-spacing:0.45px">Databa</div></div></div>
<div class="a" style="left:667px;top:239.25px;width:275px;height:1px;background:#303030;"></div>
<div class="a" style="left:860px;top:224.50px;width:40px;height:15px;overflow:hidden"><div class="a" style="left:-860px;top:-224.50px;width:960px;height:200px"><div class="t" style="left:866.50px;top:227.80px;font-family:'Liberation Sans';font-size:9.3px;font-weight:normal;color:#000;letter-spacing:0.45px">OCR Vo</div></div></div>
<div class="a" style="left:900px;top:130px;width:1.2px;height:112.5px;background:#202020;"></div>
<div class="a" style="left:667px;top:243px;width:275px;height:1px;background:#303030;"></div>
<div class="a" style="left:667px;top:244px;width:275px;height:2px;background:#e0dcd8;"></div>
<div class="a" style="left:667px;top:246.2px;width:275px;height:15px;background:#807d82;"></div>
<div class="a" style="left:667px;top:261.2px;width:275px;height:2px;background:#c8c4bc;"></div>
<div class="a" style="left:667px;top:263px;width:275px;height:20px;background:linear-gradient(180deg,#fbfafa 0,#efeded 50%,#e0dcda 100%);"></div>
<div class="a" style="left:667px;top:283px;width:275px;height:3.5px;background:#a8a498;"></div>
<div class="a" style="left:667px;top:286.5px;width:275px;height:11.5px;background:#d4d0c8;"></div>
<div class="a" style="left:667px;top:298px;width:275px;height:1.2px;background:#404040;"></div>
<div class="a" style="left:667px;top:312px;width:275px;height:11px;background:#0a2060;"></div>
</div></div>
<div class="a" style="left:382px;top:116px;width:486px;height:608px;background:#404040;"></div>
<div class="a" style="left:382px;top:116px;width:485px;height:607px;background:#e8e6e2;"></div>
<div class="a" style="left:383px;top:117px;width:484px;height:606px;background:#808080;"></div>
<div class="a" style="left:383px;top:117px;width:483px;height:605px;background:#fff;"></div>
<div class="a" style="left:384px;top:118px;width:482px;height:604px;background:#d4d0c8;"></div>
<div class="a" style="left:385px;top:119px;width:480px;height:14px;background:#0a246a;"></div>
<div class="a" style="left:387px;top:122px;width:10px;height:9px;background:#d8e4f4;border:1px solid #505070"></div>
<div class="a" style="left:388px;top:123px;width:8px;height:1.6px;background:#6040b0;"></div>
<div class="a" style="left:388px;top:125.3px;width:8px;height:0.7px;background:#ffffff;"></div>
<div class="a" style="left:388px;top:127.5px;width:8px;height:0.7px;background:#ffffff;"></div>
<div class="a" style="left:390px;top:124.6px;width:0.7px;height:5.4px;background:#ffffff;"></div>
<div class="t" style="left:399.00px;top:121.60px;font-family:'Liberation Sans';font-size:10px;font-weight:bold;color:#fff;transform:scaleX(0.8862);transform-origin:0 0;">Properties of Table Locator &#x27;TableLoc&#x27;</div>
<div class="a" style="left:851px;top:121px;width:12px;height:10px;background:#404040;"></div><div class="a" style="left:851px;top:121px;width:11px;height:9px;background:#fff;"></div><div class="a" style="left:852px;top:122px;width:10px;height:8px;background:#808080;"></div><div class="a" style="left:852px;top:122px;width:9px;height:7px;background:#d4d0c8;"></div>
<svg class="a" style="left:853px;top:122px" width="8" height="8"><path d="M1.5 1.5 L6.5 6.5 M6.5 1.5 L1.5 6.5" stroke="#000" stroke-width="1.4"/></svg>
<div class="a" style="left:388px;top:152px;width:475px;height:371px;background:#fff;border-left:1px solid #4a6ab8;border-top:1px solid #4a6ab8;border-right:1px solid #4a6ab8"></div>
<svg class="a" style="left:389px;top:136px" width="57" height="17"><path d="M0.5 16.5 L12 1.5 Q15 0.5 19 0.5 L54 0.5 Q55.5 0.5 55.5 3 L55.5 16.5 Z" fill="url(#tg)" stroke="#3c5cb8" stroke-width="1"/><defs><linearGradient id="tg" x1="0" y1="0" x2="0" y2="1"><stop offset="0" stop-color="#fdfcfb"/><stop offset="1" stop-color="#e4e0da"/></linearGradient></defs></svg>
<svg class="a" style="left:446px;top:136px" width="65" height="17"><path d="M0.5 16.5 L1 1.5 Q4 0.5 8 0.5 L62 0.5 Q63.5 0.5 63.5 3 L63.5 16.5 Z" fill="url(#tg)" stroke="#3c5cb8" stroke-width="1"/><defs><linearGradient id="tg" x1="0" y1="0" x2="0" y2="1"><stop offset="0" stop-color="#fdfcfb"/><stop offset="1" stop-color="#e4e0da"/></linearGradient></defs></svg>
<svg class="a" style="left:511px;top:136px" width="32" height="17"><path d="M0.5 16.5 L2 1.5 Q5 0.5 9 0.5 L29 0.5 Q30.5 0.5 30.5 3 L30.5 16.5 Z" fill="url(#tg)" stroke="#3c5cb8" stroke-width="1"/><defs><linearGradient id="tg" x1="0" y1="0" x2="0" y2="1"><stop offset="0" stop-color="#fdfcfb"/><stop offset="1" stop-color="#e4e0da"/></linearGradient></defs></svg>
<svg class="a" style="left:543px;top:136px" width="54" height="17"><path d="M0.5 16.5 L2 1.5 Q5 0.5 9 0.5 L51 0.5 Q52.5 0.5 52.5 3 L52.5 16.5 Z" fill="url(#tg)" stroke="#3c5cb8" stroke-width="1"/><defs><linearGradient id="tg" x1="0" y1="0" x2="0" y2="1"><stop offset="0" stop-color="#fdfcfb"/><stop offset="1" stop-color="#e4e0da"/></linearGradient></defs></svg>
<svg class="a" style="left:596px;top:136px" width="82" height="17"><path d="M0.5 16.5 L2 1.5 Q5 0.5 9 0.5 L79 0.5 Q80.5 0.5 80.5 3 L80.5 16.5 Z" fill="url(#tg)" stroke="#3c5cb8" stroke-width="1"/><defs><linearGradient id="tg" x1="0" y1="0" x2="0" y2="1"><stop offset="0" stop-color="#fdfcfb"/><stop offset="1" stop-color="#e4e0da"/></linearGradient></defs></svg>
<svg class="a" style="left:669px;top:135px" width="76" height="19"><path d="M0.5 17.5 L13 2.5 Q14 1.5 17 1.5 L72 1.5 Q74.5 1.5 74.5 4 L74.5 17.5" fill="#fff" stroke="#3c5cb8" stroke-width="1"/><rect x="1" y="17" width="73" height="2" fill="#fff"/></svg>
<div class="t" style="left:407.85px;top:141.20px;font-family:'Liberation Sans';font-size:9px;font-weight:normal;color:#000;transform:scaleX(0.9007);transform-origin:0 0;">Settings</div>
<div class="t" style="left:456.20px;top:141.20px;font-family:'Liberation Sans';font-size:9px;font-weight:normal;color:#909090;transform:scaleX(0.9176);transform-origin:0 0;">Master Item</div>
<div class="t" style="left:518.70px;top:141.20px;font-family:'Liberation Sans';font-size:9px;font-weight:normal;color:#909090;transform:scaleX(0.8294);transform-origin:0 0;">Cells</div>
<div class="t" style="left:552.15px;top:141.20px;font-family:'Liberation Sans';font-size:9px;font-weight:normal;color:#000;transform:scaleX(0.8918);transform-origin:0 0;">Advanced</div>
<div class="t" style="left:607.90px;top:141.20px;font-family:'Liberation Sans';font-size:9px;font-weight:normal;color:#000;transform:scaleX(0.8614);transform-origin:0 0;">Knowledge Base</div>
<div class="t" style="left:684.75px;top:141.20px;font-family:'Liberation Sans';font-size:8.8px;font-weight:bold;color:#000;transform:scaleX(0.9970);transform-origin:0 0;">Test Results</div>
<div class="a" style="left:389px;top:153px;width:34px;height:369px;background:linear-gradient(90deg,#f8f8f8 0,#f0eeee 40%,#dcd8d8 100%);"></div>
<div class="a" style="left:397px;top:158.5px;width:3.5px;height:2.2px;background:#78c0e8;border-radius:1px"></div>
<div class="a" style="left:404px;top:158.5px;width:7px;height:2.2px;background:#78c0e8;border-radius:1px"></div>
<div class="a" style="left:414.5px;top:158.5px;width:4px;height:2.2px;background:#78c0e8;border-radius:1px"></div>
<div class="a" style="left:397px;top:162.2px;width:3.5px;height:2.2px;background:#88d040;border-radius:1px"></div>
<div class="a" style="left:404px;top:162.2px;width:7px;height:2.2px;background:#88d040;border-radius:1px"></div>
<div class="a" style="left:414.5px;top:162.2px;width:4px;height:2.2px;background:#88d040;border-radius:1px"></div>
<div class="a" style="left:397px;top:165.9px;width:3.5px;height:2.2px;background:#78c0e8;border-radius:1px"></div>
<div class="a" style="left:404px;top:165.9px;width:7px;height:2.2px;background:#78c0e8;border-radius:1px"></div>
<div class="a" style="left:414.5px;top:165.9px;width:4px;height:2.2px;background:#78c0e8;border-radius:1px"></div>
<div class="a" style="left:397px;top:169.6px;width:3.5px;height:2.2px;background:#88d040;border-radius:1px"></div>
<div class="a" style="left:404px;top:169.6px;width:7px;height:2.2px;background:#88d040;border-radius:1px"></div>
<div class="a" style="left:414.5px;top:169.6px;width:4px;height:2.2px;background:#88d040;border-radius:1px"></div>
<div class="a" style="left:397px;top:173.3px;width:3.5px;height:2.2px;background:#78c0e8;border-radius:1px"></div>
<div class="a" style="left:404px;top:173.3px;width:7px;height:2.2px;background:#78c0e8;border-radius:1px"></div>
<div class="a" style="left:414.5px;top:173.3px;width:4px;height:2.2px;background:#78c0e8;border-radius:1px"></div>
<div class="a" style="left:397px;top:177.0px;width:3.5px;height:2.2px;background:#88d040;border-radius:1px"></div>
<div class="a" style="left:404px;top:177.0px;width:7px;height:2.2px;background:#88d040;border-radius:1px"></div>
<div class="a" style="left:414.5px;top:177.0px;width:4px;height:2.2px;background:#88d040;border-radius:1px"></div>
<div class="a" style="left:397px;top:197.0px;width:21.5px;height:2.2px;background:#78c0e8;border-radius:1px"></div>
<div class="a" style="left:397px;top:200.55px;width:21.5px;height:2.2px;background:#88d040;border-radius:1px"></div>
<div class="a" style="left:397px;top:204.1px;width:21.5px;height:2.2px;background:#78c0e8;border-radius:1px"></div>
<div class="a" style="left:397px;top:207.65px;width:21.5px;height:2.2px;background:#88d040;border-radius:1px"></div>
<div class="a" style="left:397px;top:211.2px;width:21.5px;height:2.2px;background:#78c0e8;border-radius:1px"></div>
<div class="a" style="left:397px;top:214.75px;width:21.5px;height:2.2px;background:#88d040;border-radius:1px"></div>
<div class="a" style="left:397.3px;top:233.5px;width:4px;height:21px;background:#78c0e8;border:0.5px solid #5098c0"></div>
<div class="a" style="left:405px;top:233.5px;width:7px;height:21px;background:#88d040;border:0.5px solid #60a020"></div>
<div class="a" style="left:414.6px;top:233.5px;width:4px;height:21px;background:#78c0e8;border:0.5px solid #5098c0"></div>
<div class="a" style="left:392px;top:266.3px;width:30px;height:29.7px;background:linear-gradient(180deg,#d8dcec,#c4c8dc);border:1px solid #7080b0"></div>
<div class="a" style="left:396px;top:270px;width:3.5px;height:3.5px;background:#88d040;border:0.5px solid #509020"></div>
<div class="a" style="left:401px;top:270px;width:3.5px;height:3.5px;background:#88d040;border:0.5px solid #509020"></div>
<div class="a" style="left:396px;top:275px;width:3.5px;height:3.5px;background:#88d040;border:0.5px solid #509020"></div>
<div class="a" style="left:401px;top:275px;width:3.5px;height:3.5px;background:#88d040;border:0.5px solid #509020"></div>
<svg class="a" style="left:392px;top:266px" width="30" height="30"><line x1="4" y1="26" x2="26" y2="4" stroke="#202020" stroke-width="1.2"/></svg>
<div class="a" style="left:406.5px;top:281.5px;width:4.5px;height:4.5px;background:#80c040;border:1px solid #181818"></div>
<div class="a" style="left:412.0px;top:281.5px;width:4.5px;height:4.5px;background:#80c040;border:1px solid #181818"></div>
<div class="a" style="left:406.5px;top:287.0px;width:4.5px;height:4.5px;background:#80c040;border:1px solid #181818"></div>
<div class="a" style="left:412.0px;top:287.0px;width:4.5px;height:4.5px;background:#80c040;border:1px solid #181818"></div>
<div class="a" style="left:423.5px;top:152.5px;width:437px;height:14px;background:linear-gradient(180deg,#6a7cb4 0,#3c5094 45%,#1c2e70 100%);"></div>
<div class="a" style="left:523.5px;top:153px;width:1px;height:13.5px;background:#a0aad0;"></div>
<div class="a" style="left:608px;top:153px;width:1px;height:13.5px;background:#a0aad0;"></div>
<div class="a" style="left:691.5px;top:153px;width:1px;height:13.5px;background:#a0aad0;"></div>
<div class="a" style="left:776px;top:153px;width:1px;height:13.5px;background:#a0aad0;"></div>
<div class="t" style="left:457.00px;top:156.20px;font-family:'Liberation Sans';font-size:9px;font-weight:bold;color:#fff;transform:scaleX(0.9037);transform-origin:0 0;">Quantity</div>
<div class="t" style="left:542.75px;top:156.20px;font-family:'Liberation Sans';font-size:9px;font-weight:bold;color:#fff;transform:scaleX(0.9492);transform-origin:0 0;">Description</div>
<div class="t" style="left:630.55px;top:156.20px;font-family:'Liberation Sans';font-size:9px;font-weight:bold;color:#fff;transform:scaleX(0.9377);transform-origin:0 0;">Unit Price</div>
<div class="t" style="left:712.90px;top:156.20px;font-family:'Liberation Sans';font-size:9px;font-weight:bold;color:#fff;transform:scaleX(0.9414);transform-origin:0 0;">Total Price</div>
<div class="t" style="left:800.50px;top:156.20px;font-family:'Liberation Sans';font-size:9px;font-weight:bold;color:#fff;transform:scaleX(0.9347);transform-origin:0 0;">Discount</div>
<div class="a" style="left:423.5px;top:166.8px;width:13.5px;height:14.25px;background:linear-gradient(180deg,#56689e 0,#34468a 40%,#1c2c6a 100%);border-bottom:1px solid #a8b0d0"></div>
<div class="a" style="left:437px;top:166.8px;width:86.5px;height:14.25px;background:#fff5c4;"></div>
<div class="a" style="left:523.5px;top:166.8px;width:84.5px;height:14.25px;background:#fff200;"></div>
<div class="a" style="left:608px;top:166.8px;width:83.5px;height:14.25px;background:#fff5c4;"></div>
<div class="a" style="left:691.5px;top:166.8px;width:84.5px;height:14.25px;background:#fff5c4;"></div>
<div class="a" style="left:776px;top:166.8px;width:84px;height:14.25px;background:#fff;"></div>
<div class="a" style="left:437px;top:180px;width:423px;height:1px;background:#202020;"></div>
<div class="t" style="left:441.00px;top:169.40px;font-family:'Liberation Sans';font-size:10px;font-weight:normal;color:#151515;transform:scaleX(0.82);transform-origin:0 0">23</div>
<div class="t" style="left:528.30px;top:169.40px;font-family:'Liberation Sans';font-size:10px;font-weight:normal;color:#151515;transform:scaleX(0.82);transform-origin:0 0">GL12 STNLS LM 0 -</div>
<div class="t" style="left:611.80px;top:169.40px;font-family:'Liberation Sans';font-size:10px;font-weight:normal;color:#151515;transform:scaleX(0.82);transform-origin:0 0">7.00</div>
<div class="t" style="left:696.00px;top:169.40px;font-family:'Liberation Sans';font-size:10px;font-weight:normal;color:#151515;transform:scaleX(0.82);transform-origin:0 0">53.13</div>
<div class="t" style="left:780.00px;top:169.40px;font-family:'Liberation Sans';font-size:10px;font-weight:normal;color:#151515;transform:scaleX(0.82);transform-origin:0 0">0.00</div>
<div class="a" style="left:423.5px;top:181.05px;width:13.5px;height:14.25px;background:linear-gradient(180deg,#56689e 0,#34468a 40%,#1c2c6a 100%);border-bottom:1px solid #a8b0d0"></div>
<div class="a" style="left:437px;top:181.05px;width:86.5px;height:14.25px;background:#fff5c4;"></div>
<div class="a" style="left:523.5px;top:181.05px;width:84.5px;height:14.25px;background:#fbee8c;"></div>
<div class="a" style="left:608px;top:181.05px;width:83.5px;height:14.25px;background:#fff5c4;"></div>
<div class="a" style="left:691.5px;top:181.05px;width:84.5px;height:14.25px;background:#fff5c4;"></div>
<div class="a" style="left:776px;top:181.05px;width:84px;height:14.25px;background:#fff;"></div>
<div class="a" style="left:437px;top:194px;width:423px;height:1px;background:#202020;"></div>
<div class="t" style="left:441.00px;top:183.65px;font-family:'Liberation Sans';font-size:10px;font-weight:normal;color:#151515;transform:scaleX(0.82);transform-origin:0 0">1</div>
<div class="t" style="left:528.30px;top:183.65px;font-family:'Liberation Sans';font-size:10px;font-weight:normal;color:#151515;transform:scaleX(0.82);transform-origin:0 0">HX9 LIQ GAUGE 12</div>
<div class="t" style="left:611.80px;top:183.65px;font-family:'Liberation Sans';font-size:10px;font-weight:normal;color:#151515;transform:scaleX(0.82);transform-origin:0 0">12.02</div>
<div class="t" style="left:696.00px;top:183.65px;font-family:'Liberation Sans';font-size:10px;font-weight:normal;color:#151515;transform:scaleX(0.82);transform-origin:0 0">4.01</div>
<div class="t" style="left:780.00px;top:183.65px;font-family:'Liberation Sans';font-size:10px;font-weight:normal;color:#151515;transform:scaleX(0.82);transform-origin:0 0">0.00</div>
<div class="a" style="left:423.5px;top:195.3px;width:13.5px;height:14.25px;background:linear-gradient(180deg,#56689e 0,#34468a 40%,#1c2c6a 100%);border-bottom:1px solid #a8b0d0"></div>
<div class="a" style="left:437px;top:195.3px;width:86.5px;height:14.25px;background:#fff5c4;"></div>
<div class="a" style="left:523.5px;top:195.3px;width:84.5px;height:14.25px;background:#fff200;"></div>
<div class="a" style="left:608px;top:195.3px;width:83.5px;height:14.25px;background:#fff5c4;"></div>
<div class="a" style="left:691.5px;top:195.3px;width:84.5px;height:14.25px;background:#fff5c4;"></div>
<div class="a" style="left:776px;top:195.3px;width:84px;height:14.25px;background:#fff;"></div>
<div class="a" style="left:437px;top:209px;width:423px;height:1px;background:#202020;"></div>
<div class="t" style="left:441.00px;top:197.90px;font-family:'Liberation Sans';font-size:10px;font-weight:normal;color:#151515;transform:scaleX(0.82);transform-origin:0 0">9</div>
<div class="t" style="left:528.30px;top:197.90px;font-family:'Liberation Sans';font-size:10px;font-weight:normal;color:#151515;transform:scaleX(0.82);transform-origin:0 0">HBB44 STEEL HVR</div>
<div class="t" style="left:611.80px;top:197.90px;font-family:'Liberation Sans';font-size:10px;font-weight:normal;color:#151515;transform:scaleX(0.82);transform-origin:0 0">34.90</div>
<div class="t" style="left:696.00px;top:197.90px;font-family:'Liberation Sans';font-size:10px;font-weight:normal;color:#151515;transform:scaleX(0.82);transform-origin:0 0">104.07</div>
<div class="t" style="left:780.00px;top:197.90px;font-family:'Liberation Sans';font-size:10px;font-weight:normal;color:#151515;transform:scaleX(0.82);transform-origin:0 0">0.00</div>
<div class="a" style="left:423.5px;top:209.55px;width:13.5px;height:14.25px;background:linear-gradient(180deg,#56689e 0,#34468a 40%,#1c2c6a 100%);border-bottom:1px solid #a8b0d0"></div>
<div class="a" style="left:437px;top:209.55px;width:86.5px;height:14.25px;background:#fff5c4;"></div>
<div class="a" style="left:523.5px;top:209.55px;width:84.5px;height:14.25px;background:#fbee8c;"></div>
<div class="a" style="left:608px;top:209.55px;width:83.5px;height:14.25px;background:#fff5c4;"></div>
<div class="a" style="left:691.5px;top:209.55px;width:84.5px;height:14.25px;background:#fff5c4;"></div>
<div class="a" style="left:776px;top:209.55px;width:84px;height:14.25px;background:#fff;"></div>
<div class="a" style="left:437px;top:223px;width:423px;height:1px;background:#202020;"></div>
<div class="t" style="left:441.00px;top:212.15px;font-family:'Liberation Sans';font-size:10px;font-weight:normal;color:#151515;transform:scaleX(0.82);transform-origin:0 0">6</div>
<div class="t" style="left:528.30px;top:212.15px;font-family:'Liberation Sans';font-size:10px;font-weight:normal;color:#151515;transform:scaleX(0.82);transform-origin:0 0">GB65 GLIDER ALU</div>
<div class="t" style="left:611.80px;top:212.15px;font-family:'Liberation Sans';font-size:10px;font-weight:normal;color:#151515;transform:scaleX(0.82);transform-origin:0 0">120.00</div>
<div class="t" style="left:696.00px;top:212.15px;font-family:'Liberation Sans';font-size:10px;font-weight:normal;color:#151515;transform:scaleX(0.82);transform-origin:0 0">240.00</div>
<div class="t" style="left:780.00px;top:212.15px;font-family:'Liberation Sans';font-size:10px;font-weight:normal;color:#151515;transform:scaleX(0.82);transform-origin:0 0">0.00</div>
<div class="a" style="left:423.5px;top:223.8px;width:13.5px;height:14.25px;background:linear-gradient(180deg,#56689e 0,#34468a 40%,#1c2c6a 100%);border-bottom:1px solid #a8b0d0"></div>
<div class="a" style="left:437px;top:223.8px;width:86.5px;height:14.25px;background:#fff5c4;"></div>
<div class="a" style="left:523.5px;top:223.8px;width:84.5px;height:14.25px;background:#fbee8c;"></div>
<div class="a" style="left:608px;top:223.8px;width:83.5px;height:14.25px;background:#fff5c4;"></div>
<div class="a" style="left:691.5px;top:223.8px;width:84.5px;height:14.25px;background:#fff5c4;"></div>
<div class="a" style="left:776px;top:223.8px;width:84px;height:14.25px;background:#fff;"></div>
<div class="a" style="left:437px;top:237px;width:423px;height:1px;background:#202020;"></div>
<div class="t" style="left:441.00px;top:226.40px;font-family:'Liberation Sans';font-size:10px;font-weight:normal;color:#151515;transform:scaleX(0.82);transform-origin:0 0">5</div>
<div class="t" style="left:528.30px;top:226.40px;font-family:'Liberation Sans';font-size:10px;font-weight:normal;color:#151515;transform:scaleX(0.82);transform-origin:0 0">GB88 GLIDER ALU</div>
<div class="t" style="left:611.80px;top:226.40px;font-family:'Liberation Sans';font-size:10px;font-weight:normal;color:#151515;transform:scaleX(0.82);transform-origin:0 0">150.00</div>
<div class="t" style="left:696.00px;top:226.40px;font-family:'Liberation Sans';font-size:10px;font-weight:normal;color:#151515;transform:scaleX(0.82);transform-origin:0 0">250.00</div>
<div class="t" style="left:780.00px;top:226.40px;font-family:'Liberation Sans';font-size:10px;font-weight:normal;color:#151515;transform:scaleX(0.82);transform-origin:0 0">0.00</div>
<div class="a" style="left:423.5px;top:238.05px;width:13.5px;height:14.25px;background:linear-gradient(180deg,#56689e 0,#34468a 40%,#1c2c6a 100%);border-bottom:1px solid #a8b0d0"></div>
<div class="a" style="left:437px;top:238.05px;width:86.5px;height:14.25px;background:#fff5c4;"></div>
<div class="a" style="left:523.5px;top:238.05px;width:84.5px;height:14.25px;background:#fbee8c;"></div>
<div class="a" style="left:608px;top:238.05px;width:83.5px;height:14.25px;background:#fff5c4;"></div>
<div class="a" style="left:691.5px;top:238.05px;width:84.5px;height:14.25px;background:#fff5c4;"></div>
<div class="a" style="left:776px;top:238.05px;width:84px;height:14.25px;background:#fff;"></div>
<div class="a" style="left:437px;top:251px;width:423px;height:1px;background:#202020;"></div>
<div class="t" style="left:441.00px;top:240.65px;font-family:'Liberation Sans';font-size:10px;font-weight:normal;color:#151515;transform:scaleX(0.82);transform-origin:0 0">1</div>
<div class="t" style="left:528.30px;top:240.65px;font-family:'Liberation Sans';font-size:10px;font-weight:normal;color:#151515;transform:scaleX(0.82);transform-origin:0 0">GB89 GLIDER ALU</div>
<div class="t" style="left:611.80px;top:240.65px;font-family:'Liberation Sans';font-size:10px;font-weight:normal;color:#151515;transform:scaleX(0.82);transform-origin:0 0">150.00</div>
<div class="t" style="left:696.00px;top:240.65px;font-family:'Liberation Sans';font-size:10px;font-weight:normal;color:#151515;transform:scaleX(0.82);transform-origin:0 0">50.00</div>
<div class="t" style="left:780.00px;top:240.65px;font-family:'Liberation Sans';font-size:10px;font-weight:normal;color:#151515;transform:scaleX(0.82);transform-origin:0 0">0.00</div>
<div class="a" style="left:423.5px;top:252.3px;width:13.5px;height:14.25px;background:linear-gradient(180deg,#56689e 0,#34468a 40%,#1c2c6a 100%);border-bottom:1px solid #a8b0d0"></div>
<div class="a" style="left:437px;top:252.3px;width:86.5px;height:14.25px;background:#fff5c4;"></div>
<div class="a" style="left:523.5px;top:252.3px;width:84.5px;height:14.25px;background:#fff200;"></div>
<div class="a" style="left:608px;top:252.3px;width:83.5px;height:14.25px;background:#fff5c4;"></div>
<div class="a" style="left:691.5px;top:252.3px;width:84.5px;height:14.25px;background:#fff5c4;"></div>
<div class="a" style="left:776px;top:252.3px;width:84px;height:14.25px;background:#fff;"></div>
<div class="a" style="left:437px;top:266px;width:423px;height:1px;background:#202020;"></div>
<div class="t" style="left:441.00px;top:254.90px;font-family:'Liberation Sans';font-size:10px;font-weight:normal;color:#151515;transform:scaleX(0.82);transform-origin:0 0">1000</div>
<div class="t" style="left:528.30px;top:254.90px;font-family:'Liberation Sans';font-size:10px;font-weight:normal;color:#151515;transform:scaleX(0.82);transform-origin:0 0">S123 TITAN SCRE</div>
<div class="t" style="left:611.80px;top:254.90px;font-family:'Liberation Sans';font-size:10px;font-weight:normal;color:#151515;transform:scaleX(0.82);transform-origin:0 0">0.12</div>
<div class="t" style="left:696.00px;top:254.90px;font-family:'Liberation Sans';font-size:10px;font-weight:normal;color:#151515;transform:scaleX(0.82);transform-origin:0 0">40.00</div>
<div class="t" style="left:780.00px;top:254.90px;font-family:'Liberation Sans';font-size:10px;font-weight:normal;color:#151515;transform:scaleX(0.82);transform-origin:0 0">0.00</div>
<div class="a" style="left:423.5px;top:266.55px;width:13.5px;height:14.25px;background:linear-gradient(180deg,#56689e 0,#34468a 40%,#1c2c6a 100%);border-bottom:1px solid #a8b0d0"></div>
<div class="a" style="left:437px;top:266.55px;width:86.5px;height:14.25px;background:#fff5c4;"></div>
<div class="a" style="left:523.5px;top:266.55px;width:84.5px;height:14.25px;background:#fff200;"></div>
<div class="a" style="left:608px;top:266.55px;width:83.5px;height:14.25px;background:#fff5c4;"></div>
<div class="a" style="left:691.5px;top:266.55px;width:84.5px;height:14.25px;background:#fff5c4;"></div>
<div class="a" style="left:776px;top:266.55px;width:84px;height:14.25px;background:#fff;"></div>
<div class="a" style="left:437px;top:280px;width:423px;height:1px;background:#202020;"></div>
<div class="t" style="left:441.00px;top:269.15px;font-family:'Liberation Sans';font-size:10px;font-weight:normal;color:#151515;transform:scaleX(0.82);transform-origin:0 0">2000</div>
<div class="t" style="left:528.30px;top:269.15px;font-family:'Liberation Sans';font-size:10px;font-weight:normal;color:#151515;transform:scaleX(0.82);transform-origin:0 0">S412 TITAN SCRE</div>
<div class="t" style="left:611.80px;top:269.15px;font-family:'Liberation Sans';font-size:10px;font-weight:normal;color:#151515;transform:scaleX(0.82);transform-origin:0 0">0.08</div>
<div class="t" style="left:696.00px;top:269.15px;font-family:'Liberation Sans';font-size:10px;font-weight:normal;color:#151515;transform:scaleX(0.82);transform-origin:0 0">5333</div>
<div class="t" style="left:780.00px;top:269.15px;font-family:'Liberation Sans';font-size:10px;font-weight:normal;color:#151515;transform:scaleX(0.82);transform-origin:0 0">0.00</div>
<div class="a" style="left:423.5px;top:280.8px;width:13.5px;height:14.25px;background:linear-gradient(180deg,#56689e 0,#34468a 40%,#1c2c6a 100%);border-bottom:1px solid #a8b0d0"></div>
<div class="a" style="left:437px;top:280.8px;width:86.5px;height:14.25px;background:#fff5c4;"></div>
<div class="a" style="left:523.5px;top:280.8px;width:84.5px;height:14.25px;background:#fff200;"></div>
<div class="a" style="left:608px;top:280.8px;width:83.5px;height:14.25px;background:#fff5c4;"></div>
<div class="a" style="left:691.5px;top:280.8px;width:84.5px;height:14.25px;background:#fff5c4;"></div>
<div class="a" style="left:776px;top:280.8px;width:84px;height:14.25px;background:#fff;"></div>
<div class="a" style="left:437px;top:294px;width:423px;height:1px;background:#202020;"></div>
<div class="t" style="left:441.00px;top:283.40px;font-family:'Liberation Sans';font-size:10px;font-weight:normal;color:#151515;transform:scaleX(0.82);transform-origin:0 0">2000</div>
<div class="t" style="left:528.30px;top:283.40px;font-family:'Liberation Sans';font-size:10px;font-weight:normal;color:#151515;transform:scaleX(0.82);transform-origin:0 0">S414 TITAN SCRE</div>
<div class="t" style="left:611.80px;top:283.40px;font-family:'Liberation Sans';font-size:10px;font-weight:normal;color:#151515;transform:scaleX(0.82);transform-origin:0 0">0.08</div>
<div class="t" style="left:696.00px;top:283.40px;font-family:'Liberation Sans';font-size:10px;font-weight:normal;color:#151515;transform:scaleX(0.82);transform-origin:0 0">5333</div>
<div class="t" style="left:780.00px;top:283.40px;font-family:'Liberation Sans';font-size:10px;font-weight:normal;color:#151515;transform:scaleX(0.82);transform-origin:0 0">0.00</div>
<div class="a" style="left:423.5px;top:295.05px;width:13.5px;height:14.25px;background:linear-gradient(180deg,#56689e 0,#34468a 40%,#1c2c6a 100%);border-bottom:1px solid #a8b0d0"></div>
<div class="a" style="left:437px;top:295.05px;width:86.5px;height:14.25px;background:#fff5c4;"></div>
<div class="a" style="left:523.5px;top:295.05px;width:84.5px;height:14.25px;background:#fff200;"></div>
<div class="a" style="left:608px;top:295.05px;width:83.5px;height:14.25px;background:#fff5c4;"></div>
<div class="a" style="left:691.5px;top:295.05px;width:84.5px;height:14.25px;background:#fff5c4;"></div>
<div class="a" style="left:776px;top:295.05px;width:84px;height:14.25px;background:#fff;"></div>
<div class="a" style="left:437px;top:308px;width:423px;height:1px;background:#202020;"></div>
<div class="t" style="left:441.00px;top:297.65px;font-family:'Liberation Sans';font-size:10px;font-weight:normal;color:#151515;transform:scaleX(0.82);transform-origin:0 0">4000</div>
<div class="t" style="left:528.30px;top:297.65px;font-family:'Liberation Sans';font-size:10px;font-weight:normal;color:#151515;transform:scaleX(0.82);transform-origin:0 0">S419 TITAN SCRE</div>
<div class="t" style="left:611.80px;top:297.65px;font-family:'Liberation Sans';font-size:10px;font-weight:normal;color:#151515;transform:scaleX(0.82);transform-origin:0 0">0.20</div>
<div class="t" style="left:696.00px;top:297.65px;font-family:'Liberation Sans';font-size:10px;font-weight:normal;color:#151515;transform:scaleX(0.82);transform-origin:0 0">266.67</div>
<div class="t" style="left:780.00px;top:297.65px;font-family:'Liberation Sans';font-size:10px;font-weight:normal;color:#151515;transform:scaleX(0.82);transform-origin:0 0">0.00</div>
<div class="a" style="left:436.5px;top:166.8px;width:1.2px;height:142.5px;background:#2a2a2a;"></div>
<div class="a" style="left:523.0px;top:166.8px;width:1.2px;height:142.5px;background:#2a2a2a;"></div>
<div class="a" style="left:607.5px;top:166.8px;width:1.2px;height:142.5px;background:#2a2a2a;"></div>
<div class="a" style="left:691.0px;top:166.8px;width:1.2px;height:142.5px;background:#2a2a2a;"></div>
<div class="a" style="left:775.5px;top:166.8px;width:1.2px;height:142.5px;background:#2a2a2a;"></div>
<div class="a" style="left:859.5px;top:166.8px;width:1.2px;height:142.5px;background:#2a2a2a;"></div>
<svg class="a" style="left:426px;top:169px" width="8" height="10"><path d="M2 1 L7 5 L2 9 Z" fill="#000"/></svg>
<div class="a" style="left:861px;top:152px;width:1.5px;height:371px;background:#4a6ab8;"></div>
<div class="a" style="left:425px;top:497.5px;width:433px;height:23.5px;background:#dcdcdc;"></div>
<div class="t" style="left:427.50px;top:498.20px;font-family:'Liberation Sans';font-size:9.6px;font-weight:normal;color:#000;transform:scaleX(1.0134);transform-origin:0 0;">Automatic settings were used to extract this table.</div>
<div class="a" style="left:388px;top:523.6px;width:474px;height:169.6px;background:#fdead7;border-top:1.3px solid #141450;border-left:1px solid #505050;border-bottom:1.2px solid #505050;border-right:1px solid #505050"></div>
<div class="a" style="left:742px;top:524.5px;width:1.2px;height:168px;background:#606060;"></div>
<div class="a" style="left:743.2px;top:522.5px;width:3px;height:170px;background:linear-gradient(90deg,#f0eeea,#d8d4ce);"></div>
<div class="a" style="left:746.2px;top:524.5px;width:1.3px;height:168px;background:#404040;"></div>
<div class="t" style="left:389.5px;top:528.20px;font-family:'Liberation Mono';font-size:8.70px;font-weight:normal;color:#000;-webkit-text-stroke:0.12px #000">Lines-based algorithm: 0 ms</div>
<div class="t" style="left:389.5px;top:538.65px;font-family:'Liberation Mono';font-size:8.70px;font-weight:normal;color:#000;-webkit-text-stroke:0.12px #000">Total time: 0 ms</div>
<div class="t" style="left:389.5px;top:570.00px;font-family:'Liberation Mono';font-size:8.70px;font-weight:normal;color:#000;-webkit-text-stroke:0.12px #000">Algorithm results:</div>
<div class="t" style="left:389.5px;top:580.45px;font-family:'Liberation Mono';font-size:8.70px;font-weight:normal;color:#000;-webkit-text-stroke:0.12px #000">0.00 Points for Algorithm &quot;Amount-based&quot;</div>
<div class="t" style="left:389.5px;top:590.90px;font-family:'Liberation Mono';font-size:8.70px;font-weight:normal;color:#000;-webkit-text-stroke:0.12px #000">0.00 Points for Algorithm &quot;Position-based&quot;</div>
<div class="t" style="left:389.5px;top:601.35px;font-family:'Liberation Mono';font-size:8.70px;font-weight:normal;color:#000;-webkit-text-stroke:0.12px #000">0.00 Points for Algorithm &quot;Header-based&quot;</div>
<div class="t" style="left:389.5px;top:611.80px;font-family:'Liberation Mono';font-size:8.70px;font-weight:normal;color:#000;-webkit-text-stroke:0.12px #000">32.00 Points for Algorithm &quot;Lines-Based&quot;</div>
<div class="t" style="left:389.5px;top:622.25px;font-family:'Liberation Mono';font-size:8.70px;font-weight:normal;color:#000;-webkit-text-stroke:0.12px #000">0.00 Points for Algorithm &quot;Layout-based&quot;</div>
<div class="t" style="left:748px;top:530.60px;font-family:'Liberation Mono';font-size:8.17px;font-weight:bold;color:#1a1a1a;">Colors in Document:</div>
<div class="a" style="left:748px;top:538.1px;width:93.10000000000001px;height:0.8px;background:#1a1a1a;"></div>
<div class="t" style="left:748px;top:545.60px;font-family:'Liberation Mono';font-size:8.17px;font-weight:normal;color:#000;">Header Line:</div>
<div class="a" style="left:825.2px;top:543.3000000000001px;width:32.3px;height:8.6px;background:#00b000;border:1px solid #303030"></div>
<div class="t" style="left:748px;top:557.52px;font-family:'Liberation Mono';font-size:8.17px;font-weight:normal;color:#000;">Horiz. Line:</div>
<div class="a" style="left:825.2px;top:555.22px;width:32.3px;height:8.6px;background:#ff0000;border:1px solid #303030"></div>
<div class="t" style="left:748px;top:569.44px;font-family:'Liberation Mono';font-size:8.17px;font-weight:normal;color:#000;">Vert. Line:</div>
<div class="a" style="left:825.2px;top:567.1400000000001px;width:32.3px;height:8.6px;background:#800000;border:1px solid #303030"></div>
<div class="t" style="left:748px;top:581.36px;font-family:'Liberation Mono';font-size:8.17px;font-weight:bold;color:#1a1a1a;">Colors in Grid:</div>
<div class="a" style="left:748px;top:588.86px;width:73.5px;height:0.8px;background:#1a1a1a;"></div>
<div class="t" style="left:748px;top:593.28px;font-family:'Liberation Mono';font-size:8.17px;font-weight:normal;color:#000;">Numeric:</div>
<div class="a" style="left:825.2px;top:590.98px;width:32.3px;height:8.6px;background:#fff6b8;border:1px solid #303030"></div>
<div class="t" style="left:748px;top:605.20px;font-family:'Liberation Mono';font-size:8.17px;font-weight:normal;color:#000;">Mixed:</div>
<div class="a" style="left:825.2px;top:602.9000000000001px;width:32.3px;height:8.6px;background:#ffec70;border:1px solid #303030"></div>
<div class="t" style="left:748px;top:617.12px;font-family:'Liberation Mono';font-size:8.17px;font-weight:normal;color:#000;">Alpha:</div>
<div class="a" style="left:825.2px;top:614.82px;width:32.3px;height:8.6px;background:#fff200;border:1px solid #303030"></div>
<div class="t" style="left:748px;top:629.04px;font-family:'Liberation Mono';font-size:8.17px;font-weight:normal;color:#000;">Interpolated:</div>
<div class="a" style="left:825.2px;top:626.74px;width:32.3px;height:8.6px;background:#a8d8e8;border:1px solid #303030"></div>
<div class="a" style="left:747.3px;top:666px;width:21.5px;height:16px;background:#fdead7;border:1px solid;border-color:#fff #503018 #503018 #fff;box-shadow:inset -1px -1px 0 #a08060"></div>
<div class="t" style="left:751.05px;top:671.00px;font-family:'Liberation Sans';font-size:9px;font-weight:normal;color:#111;transform:scaleX(1.2068);transform-origin:0 0;">AB</div>
<div class="a" style="left:769.65px;top:666px;width:21.5px;height:16px;background:#fdead7;border:1px solid;border-color:#fff #503018 #503018 #fff;box-shadow:inset -1px -1px 0 #a08060"></div>
<div class="t" style="left:773.40px;top:671.00px;font-family:'Liberation Sans';font-size:9px;font-weight:normal;color:#111;transform:scaleX(1.2068);transform-origin:0 0;">PB</div>
<div class="a" style="left:792.0px;top:666px;width:21.5px;height:16px;background:#fdead7;border:1px solid;border-color:#fff #503018 #503018 #fff;box-shadow:inset -1px -1px 0 #a08060"></div>
<div class="t" style="left:795.75px;top:671.00px;font-family:'Liberation Sans';font-size:9px;font-weight:normal;color:#111;transform:scaleX(1.1586);transform-origin:0 0;">HB</div>
<div class="a" style="left:814.3499999999999px;top:666px;width:22px;height:16px;background:#fdead7;border:1.5px solid #000"></div>
<div class="a" style="left:817.3499999999999px;top:669px;width:16px;height:10px;background:transparent;border:1px dotted #404040"></div>
<div class="t" style="left:818.10px;top:671.00px;font-family:'Liberation Sans';font-size:9px;font-weight:normal;color:#111;transform:scaleX(1.3163);transform-origin:0 0;">LB</div>
<div class="a" style="left:836.6999999999999px;top:666px;width:21.5px;height:16px;background:#fdead7;border:1px solid;border-color:#fff #503018 #503018 #fff;box-shadow:inset -1px -1px 0 #a08060"></div>
<div class="t" style="left:840.45px;top:671.00px;font-family:'Liberation Sans';font-size:9px;font-weight:normal;color:#111;transform:scaleX(1.2068);transform-origin:0 0;">YB</div>
<div class="a" style="left:643.6px;top:698.3px;width:18px;height:17.3px;background:#404040;"></div><div class="a" style="left:643.6px;top:698.3px;width:17px;height:16.3px;background:#fff;"></div><div class="a" style="left:644.6px;top:699.3px;width:16px;height:15.3px;background:#808080;"></div><div class="a" style="left:644.6px;top:699.3px;width:15px;height:14.3px;background:#d4d0c8;"></div>
<svg class="a" style="left:647px;top:701px" width="10" height="12"><path d="M7.5 1.5 L2.5 6 L7.5 10.5" fill="none" stroke="#9c9a94" stroke-width="1.2"/><path d="M8.3 2 L3.5 6 L8.3 10.2" fill="none" stroke="#fff" stroke-width="0.8"/></svg>
<div class="a" style="left:665.2px;top:698.3px;width:63px;height:17.3px;background:#404040;"></div><div class="a" style="left:665.2px;top:698.3px;width:62px;height:16.3px;background:#fff;"></div><div class="a" style="left:666.2px;top:699.3px;width:61px;height:15.3px;background:#808080;"></div><div class="a" style="left:666.2px;top:699.3px;width:60px;height:14.3px;background:#d4d0c8;"></div>
<div class="t" style="left:687.00px;top:702.50px;font-family:'Liberation Sans';font-size:9.5px;font-weight:normal;color:#000;transform:scaleX(0.8232);transform-origin:0 0;">Close</div>
<div class="a" style="left:687px;top:711.3px;width:6px;height:0.8px;background:#000;"></div>
<div class="a" style="left:732.2px;top:698.3px;width:53px;height:17.3px;background:#000;"></div>
<div class="a" style="left:733.2px;top:699.3px;width:51px;height:15.3px;background:#404040;"></div><div class="a" style="left:733.2px;top:699.3px;width:50px;height:14.3px;background:#fff;"></div><div class="a" style="left:734.2px;top:700.3px;width:49px;height:13.3px;background:#808080;"></div><div class="a" style="left:734.2px;top:700.3px;width:48px;height:12.3px;background:#d4d0c8;"></div>
<div class="a" style="left:784.8px;top:698.3px;width:9.7px;height:17.3px;background:#000;"></div>
<div class="a" style="left:785.8px;top:699.3px;width:7.7px;height:15.3px;background:#404040;"></div><div class="a" style="left:785.8px;top:699.3px;width:6.7px;height:14.3px;background:#fff;"></div><div class="a" style="left:786.8px;top:700.3px;width:5.7px;height:13.3px;background:#808080;"></div><div class="a" style="left:786.8px;top:700.3px;width:4.7px;height:12.3px;background:#d4d0c8;"></div>
<svg class="a" style="left:786.5px;top:704px" width="6" height="5"><path d="M0.5 1 L5 1 L2.75 4 Z" fill="#000"/></svg>
<div class="a" style="left:738px;top:702.5px;width:2.5px;height:7px;background:#e02010;border-radius:1px"></div>
<div class="a" style="left:738.3px;top:711px;width:2px;height:2px;background:#e02010;"></div>
<div class="a" style="left:743px;top:711px;width:1.6px;height:1.6px;background:#000;"></div>
<div class="t" style="left:756.95px;top:702.50px;font-family:'Liberation Sans';font-size:9.5px;font-weight:normal;color:#000;transform:scaleX(0.9462);transform-origin:0 0;">Test</div>
<div class="a" style="left:757px;top:711.3px;width:5px;height:0.8px;background:#000;"></div>
<div class="a" style="left:799.3px;top:698.3px;width:62.3px;height:17.3px;background:#404040;"></div><div class="a" style="left:799.3px;top:698.3px;width:61.3px;height:16.3px;background:#fff;"></div><div class="a" style="left:800.3px;top:699.3px;width:60.3px;height:15.3px;background:#808080;"></div><div class="a" style="left:800.3px;top:699.3px;width:59.3px;height:14.3px;background:#d4d0c8;"></div>
<div class="a" style="left:807px;top:702px;width:10px;height:10px;background:radial-gradient(circle at 35% 35%,#90b8ff,#1840c0);border-radius:50%;border:1px solid #7080c0"></div>
<div class="t" style="left:809.75px;top:704.00px;font-family:'Liberation Sans';font-size:8px;font-weight:bold;color:#fff;transform:scaleX(0.9201);transform-origin:0 0;">?</div>
<div class="t" style="left:828.00px;top:702.50px;font-family:'Liberation Sans';font-size:9.5px;font-weight:normal;color:#000;transform:scaleX(0.8697);transform-origin:0 0;">Help</div>
<div class="a" style="left:828.5px;top:711.3px;width:6px;height:0.8px;background:#000;"></div>
<!-- RDP vertical scrollbar -->
<div class="a" style="left:941px;top:22px;width:12px;height:706px;background:linear-gradient(90deg,#a8a8a8 0,#a8a8a8 1.5px,#ececec 1.5px,#f4f4f4 11px,#c8c8c8 11px)"></div>
<div class="a" style="left:942px;top:23px;width:11px;height:12.5px;background:#f0f0f0"></div>
<svg class="a" style="left:943px;top:26px" width="9" height="6"><path d="M1.5 4.5 L4.5 1.5 L7.5 4.5 Z" fill="#404040"/></svg>
<div class="a" style="left:942.6px;top:36.5px;width:10px;height:621px;border-radius:2px;border:1px solid #c4c4c4;border-left-color:#a8a8a8;background:linear-gradient(90deg,#fafafa 0,#ececee 45%,#c8c8cc 100%)"></div>
<svg class="a" style="left:943px;top:718px" width="9" height="6"><path d="M1.5 1.5 L4.5 4.5 L7.5 1.5 Z" fill="#404040"/></svg>
<!-- RDP horizontal scrollbar -->
<div class="a" style="left:5px;top:728px;width:937px;height:12px;background:linear-gradient(180deg,#e8e8e8,#f4f4f4)"></div>
<svg class="a" style="left:8px;top:730px" width="8" height="9"><path d="M5 1.5 L2 4.5 L5 7.5 Z" fill="#404040"/></svg>
<div class="a" style="left:19.5px;top:728.5px;width:885px;height:11px;border-radius:2px;border:1px solid #b0b0b0;background:linear-gradient(180deg,#f6f6f6 0,#e8e8e8 45%,#d0d0d0 100%)"></div>
<svg class="a" style="left:931px;top:730px" width="8" height="9"><path d="M3 1.5 L6 4.5 L3 7.5 Z" fill="#404040"/></svg>
<div class="a" style="left:942px;top:728px;width:11px;height:12px;background:#f0f0f0"></div>
<svg class="a" style="left:944px;top:342px" width="8" height="9"><path d="M1 2 H6.5 M1 4.5 H6.5 M1 7 H6.5" stroke="#505050" stroke-width="1"/></svg>
<svg class="a" style="left:457px;top:730px" width="9" height="8"><path d="M2 1 V6.5 M4.5 1 V6.5 M7 1 V6.5" stroke="#505050" stroke-width="1"/></svg>

</body></html>
